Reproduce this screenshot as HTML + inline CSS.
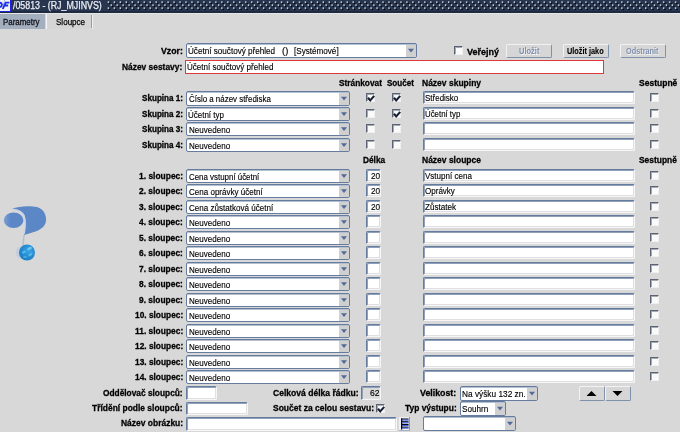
<!DOCTYPE html>
<html><head><meta charset="utf-8"><style>
html,body{margin:0;padding:0}
body{width:680px;height:432px;overflow:hidden;position:relative;background:#d8d8d8;font-family:"Liberation Sans", sans-serif}
</style></head><body>
<div style="position:absolute;left:0;top:0;width:680px;height:13px;background:#27354f"></div>
<div style="position:absolute;left:0;top:11px;width:680px;height:2px;background:#1e2a40"></div>
<svg style="position:absolute;left:0;top:0" width="680" height="13"><rect x="107.70" y="1.4" width="1.4" height="1.4" fill="#e4eaf2"/><rect x="109.10" y="2.8" width="1.3" height="1.3" fill="#000000"/><rect x="113.67" y="1.4" width="1.4" height="1.4" fill="#e4eaf2"/><rect x="115.07" y="2.8" width="1.3" height="1.3" fill="#000000"/><rect x="119.64" y="1.4" width="1.4" height="1.4" fill="#e4eaf2"/><rect x="121.04" y="2.8" width="1.3" height="1.3" fill="#000000"/><rect x="125.61" y="1.4" width="1.4" height="1.4" fill="#e4eaf2"/><rect x="127.01" y="2.8" width="1.3" height="1.3" fill="#000000"/><rect x="131.58" y="1.4" width="1.4" height="1.4" fill="#e4eaf2"/><rect x="132.98" y="2.8" width="1.3" height="1.3" fill="#000000"/><rect x="137.55" y="1.4" width="1.4" height="1.4" fill="#e4eaf2"/><rect x="138.95" y="2.8" width="1.3" height="1.3" fill="#000000"/><rect x="143.52" y="1.4" width="1.4" height="1.4" fill="#e4eaf2"/><rect x="144.92" y="2.8" width="1.3" height="1.3" fill="#000000"/><rect x="149.49" y="1.4" width="1.4" height="1.4" fill="#e4eaf2"/><rect x="150.89" y="2.8" width="1.3" height="1.3" fill="#000000"/><rect x="155.46" y="1.4" width="1.4" height="1.4" fill="#e4eaf2"/><rect x="156.86" y="2.8" width="1.3" height="1.3" fill="#000000"/><rect x="161.43" y="1.4" width="1.4" height="1.4" fill="#e4eaf2"/><rect x="162.83" y="2.8" width="1.3" height="1.3" fill="#000000"/><rect x="167.40" y="1.4" width="1.4" height="1.4" fill="#e4eaf2"/><rect x="168.80" y="2.8" width="1.3" height="1.3" fill="#000000"/><rect x="173.37" y="1.4" width="1.4" height="1.4" fill="#e4eaf2"/><rect x="174.77" y="2.8" width="1.3" height="1.3" fill="#000000"/><rect x="179.34" y="1.4" width="1.4" height="1.4" fill="#e4eaf2"/><rect x="180.74" y="2.8" width="1.3" height="1.3" fill="#000000"/><rect x="185.31" y="1.4" width="1.4" height="1.4" fill="#e4eaf2"/><rect x="186.71" y="2.8" width="1.3" height="1.3" fill="#000000"/><rect x="191.28" y="1.4" width="1.4" height="1.4" fill="#e4eaf2"/><rect x="192.68" y="2.8" width="1.3" height="1.3" fill="#000000"/><rect x="197.25" y="1.4" width="1.4" height="1.4" fill="#e4eaf2"/><rect x="198.65" y="2.8" width="1.3" height="1.3" fill="#000000"/><rect x="203.22" y="1.4" width="1.4" height="1.4" fill="#e4eaf2"/><rect x="204.62" y="2.8" width="1.3" height="1.3" fill="#000000"/><rect x="209.19" y="1.4" width="1.4" height="1.4" fill="#e4eaf2"/><rect x="210.59" y="2.8" width="1.3" height="1.3" fill="#000000"/><rect x="215.16" y="1.4" width="1.4" height="1.4" fill="#e4eaf2"/><rect x="216.56" y="2.8" width="1.3" height="1.3" fill="#000000"/><rect x="221.13" y="1.4" width="1.4" height="1.4" fill="#e4eaf2"/><rect x="222.53" y="2.8" width="1.3" height="1.3" fill="#000000"/><rect x="227.10" y="1.4" width="1.4" height="1.4" fill="#e4eaf2"/><rect x="228.50" y="2.8" width="1.3" height="1.3" fill="#000000"/><rect x="233.07" y="1.4" width="1.4" height="1.4" fill="#e4eaf2"/><rect x="234.47" y="2.8" width="1.3" height="1.3" fill="#000000"/><rect x="239.04" y="1.4" width="1.4" height="1.4" fill="#e4eaf2"/><rect x="240.44" y="2.8" width="1.3" height="1.3" fill="#000000"/><rect x="245.01" y="1.4" width="1.4" height="1.4" fill="#e4eaf2"/><rect x="246.41" y="2.8" width="1.3" height="1.3" fill="#000000"/><rect x="250.98" y="1.4" width="1.4" height="1.4" fill="#e4eaf2"/><rect x="252.38" y="2.8" width="1.3" height="1.3" fill="#000000"/><rect x="256.95" y="1.4" width="1.4" height="1.4" fill="#e4eaf2"/><rect x="258.35" y="2.8" width="1.3" height="1.3" fill="#000000"/><rect x="262.92" y="1.4" width="1.4" height="1.4" fill="#e4eaf2"/><rect x="264.32" y="2.8" width="1.3" height="1.3" fill="#000000"/><rect x="268.89" y="1.4" width="1.4" height="1.4" fill="#e4eaf2"/><rect x="270.29" y="2.8" width="1.3" height="1.3" fill="#000000"/><rect x="274.86" y="1.4" width="1.4" height="1.4" fill="#e4eaf2"/><rect x="276.26" y="2.8" width="1.3" height="1.3" fill="#000000"/><rect x="280.83" y="1.4" width="1.4" height="1.4" fill="#e4eaf2"/><rect x="282.23" y="2.8" width="1.3" height="1.3" fill="#000000"/><rect x="286.80" y="1.4" width="1.4" height="1.4" fill="#e4eaf2"/><rect x="288.20" y="2.8" width="1.3" height="1.3" fill="#000000"/><rect x="292.77" y="1.4" width="1.4" height="1.4" fill="#e4eaf2"/><rect x="294.17" y="2.8" width="1.3" height="1.3" fill="#000000"/><rect x="298.74" y="1.4" width="1.4" height="1.4" fill="#e4eaf2"/><rect x="300.14" y="2.8" width="1.3" height="1.3" fill="#000000"/><rect x="304.71" y="1.4" width="1.4" height="1.4" fill="#e4eaf2"/><rect x="306.11" y="2.8" width="1.3" height="1.3" fill="#000000"/><rect x="310.68" y="1.4" width="1.4" height="1.4" fill="#e4eaf2"/><rect x="312.08" y="2.8" width="1.3" height="1.3" fill="#000000"/><rect x="316.65" y="1.4" width="1.4" height="1.4" fill="#e4eaf2"/><rect x="318.05" y="2.8" width="1.3" height="1.3" fill="#000000"/><rect x="322.62" y="1.4" width="1.4" height="1.4" fill="#e4eaf2"/><rect x="324.02" y="2.8" width="1.3" height="1.3" fill="#000000"/><rect x="328.59" y="1.4" width="1.4" height="1.4" fill="#e4eaf2"/><rect x="329.99" y="2.8" width="1.3" height="1.3" fill="#000000"/><rect x="334.56" y="1.4" width="1.4" height="1.4" fill="#e4eaf2"/><rect x="335.96" y="2.8" width="1.3" height="1.3" fill="#000000"/><rect x="340.53" y="1.4" width="1.4" height="1.4" fill="#e4eaf2"/><rect x="341.93" y="2.8" width="1.3" height="1.3" fill="#000000"/><rect x="346.50" y="1.4" width="1.4" height="1.4" fill="#e4eaf2"/><rect x="347.90" y="2.8" width="1.3" height="1.3" fill="#000000"/><rect x="352.47" y="1.4" width="1.4" height="1.4" fill="#e4eaf2"/><rect x="353.87" y="2.8" width="1.3" height="1.3" fill="#000000"/><rect x="358.44" y="1.4" width="1.4" height="1.4" fill="#e4eaf2"/><rect x="359.84" y="2.8" width="1.3" height="1.3" fill="#000000"/><rect x="364.41" y="1.4" width="1.4" height="1.4" fill="#e4eaf2"/><rect x="365.81" y="2.8" width="1.3" height="1.3" fill="#000000"/><rect x="370.38" y="1.4" width="1.4" height="1.4" fill="#e4eaf2"/><rect x="371.78" y="2.8" width="1.3" height="1.3" fill="#000000"/><rect x="376.35" y="1.4" width="1.4" height="1.4" fill="#e4eaf2"/><rect x="377.75" y="2.8" width="1.3" height="1.3" fill="#000000"/><rect x="382.32" y="1.4" width="1.4" height="1.4" fill="#e4eaf2"/><rect x="383.72" y="2.8" width="1.3" height="1.3" fill="#000000"/><rect x="388.29" y="1.4" width="1.4" height="1.4" fill="#e4eaf2"/><rect x="389.69" y="2.8" width="1.3" height="1.3" fill="#000000"/><rect x="394.26" y="1.4" width="1.4" height="1.4" fill="#e4eaf2"/><rect x="395.66" y="2.8" width="1.3" height="1.3" fill="#000000"/><rect x="400.23" y="1.4" width="1.4" height="1.4" fill="#e4eaf2"/><rect x="401.63" y="2.8" width="1.3" height="1.3" fill="#000000"/><rect x="406.20" y="1.4" width="1.4" height="1.4" fill="#e4eaf2"/><rect x="407.60" y="2.8" width="1.3" height="1.3" fill="#000000"/><rect x="412.17" y="1.4" width="1.4" height="1.4" fill="#e4eaf2"/><rect x="413.57" y="2.8" width="1.3" height="1.3" fill="#000000"/><rect x="418.14" y="1.4" width="1.4" height="1.4" fill="#e4eaf2"/><rect x="419.54" y="2.8" width="1.3" height="1.3" fill="#000000"/><rect x="424.11" y="1.4" width="1.4" height="1.4" fill="#e4eaf2"/><rect x="425.51" y="2.8" width="1.3" height="1.3" fill="#000000"/><rect x="430.08" y="1.4" width="1.4" height="1.4" fill="#e4eaf2"/><rect x="431.48" y="2.8" width="1.3" height="1.3" fill="#000000"/><rect x="436.05" y="1.4" width="1.4" height="1.4" fill="#e4eaf2"/><rect x="437.45" y="2.8" width="1.3" height="1.3" fill="#000000"/><rect x="442.02" y="1.4" width="1.4" height="1.4" fill="#e4eaf2"/><rect x="443.42" y="2.8" width="1.3" height="1.3" fill="#000000"/><rect x="447.99" y="1.4" width="1.4" height="1.4" fill="#e4eaf2"/><rect x="449.39" y="2.8" width="1.3" height="1.3" fill="#000000"/><rect x="453.96" y="1.4" width="1.4" height="1.4" fill="#e4eaf2"/><rect x="455.36" y="2.8" width="1.3" height="1.3" fill="#000000"/><rect x="459.93" y="1.4" width="1.4" height="1.4" fill="#e4eaf2"/><rect x="461.33" y="2.8" width="1.3" height="1.3" fill="#000000"/><rect x="465.90" y="1.4" width="1.4" height="1.4" fill="#e4eaf2"/><rect x="467.30" y="2.8" width="1.3" height="1.3" fill="#000000"/><rect x="471.87" y="1.4" width="1.4" height="1.4" fill="#e4eaf2"/><rect x="473.27" y="2.8" width="1.3" height="1.3" fill="#000000"/><rect x="477.84" y="1.4" width="1.4" height="1.4" fill="#e4eaf2"/><rect x="479.24" y="2.8" width="1.3" height="1.3" fill="#000000"/><rect x="483.81" y="1.4" width="1.4" height="1.4" fill="#e4eaf2"/><rect x="485.21" y="2.8" width="1.3" height="1.3" fill="#000000"/><rect x="489.78" y="1.4" width="1.4" height="1.4" fill="#e4eaf2"/><rect x="491.18" y="2.8" width="1.3" height="1.3" fill="#000000"/><rect x="495.75" y="1.4" width="1.4" height="1.4" fill="#e4eaf2"/><rect x="497.15" y="2.8" width="1.3" height="1.3" fill="#000000"/><rect x="501.72" y="1.4" width="1.4" height="1.4" fill="#e4eaf2"/><rect x="503.12" y="2.8" width="1.3" height="1.3" fill="#000000"/><rect x="507.69" y="1.4" width="1.4" height="1.4" fill="#e4eaf2"/><rect x="509.09" y="2.8" width="1.3" height="1.3" fill="#000000"/><rect x="513.66" y="1.4" width="1.4" height="1.4" fill="#e4eaf2"/><rect x="515.06" y="2.8" width="1.3" height="1.3" fill="#000000"/><rect x="519.63" y="1.4" width="1.4" height="1.4" fill="#e4eaf2"/><rect x="521.03" y="2.8" width="1.3" height="1.3" fill="#000000"/><rect x="525.60" y="1.4" width="1.4" height="1.4" fill="#e4eaf2"/><rect x="527.00" y="2.8" width="1.3" height="1.3" fill="#000000"/><rect x="531.57" y="1.4" width="1.4" height="1.4" fill="#e4eaf2"/><rect x="532.97" y="2.8" width="1.3" height="1.3" fill="#000000"/><rect x="537.54" y="1.4" width="1.4" height="1.4" fill="#e4eaf2"/><rect x="538.94" y="2.8" width="1.3" height="1.3" fill="#000000"/><rect x="543.51" y="1.4" width="1.4" height="1.4" fill="#e4eaf2"/><rect x="544.91" y="2.8" width="1.3" height="1.3" fill="#000000"/><rect x="549.48" y="1.4" width="1.4" height="1.4" fill="#e4eaf2"/><rect x="550.88" y="2.8" width="1.3" height="1.3" fill="#000000"/><rect x="555.45" y="1.4" width="1.4" height="1.4" fill="#e4eaf2"/><rect x="556.85" y="2.8" width="1.3" height="1.3" fill="#000000"/><rect x="561.42" y="1.4" width="1.4" height="1.4" fill="#e4eaf2"/><rect x="562.82" y="2.8" width="1.3" height="1.3" fill="#000000"/><rect x="567.39" y="1.4" width="1.4" height="1.4" fill="#e4eaf2"/><rect x="568.79" y="2.8" width="1.3" height="1.3" fill="#000000"/><rect x="573.36" y="1.4" width="1.4" height="1.4" fill="#e4eaf2"/><rect x="574.76" y="2.8" width="1.3" height="1.3" fill="#000000"/><rect x="579.33" y="1.4" width="1.4" height="1.4" fill="#e4eaf2"/><rect x="580.73" y="2.8" width="1.3" height="1.3" fill="#000000"/><rect x="585.30" y="1.4" width="1.4" height="1.4" fill="#e4eaf2"/><rect x="586.70" y="2.8" width="1.3" height="1.3" fill="#000000"/><rect x="591.27" y="1.4" width="1.4" height="1.4" fill="#e4eaf2"/><rect x="592.67" y="2.8" width="1.3" height="1.3" fill="#000000"/><rect x="597.24" y="1.4" width="1.4" height="1.4" fill="#e4eaf2"/><rect x="598.64" y="2.8" width="1.3" height="1.3" fill="#000000"/><rect x="603.21" y="1.4" width="1.4" height="1.4" fill="#e4eaf2"/><rect x="604.61" y="2.8" width="1.3" height="1.3" fill="#000000"/><rect x="609.18" y="1.4" width="1.4" height="1.4" fill="#e4eaf2"/><rect x="610.58" y="2.8" width="1.3" height="1.3" fill="#000000"/><rect x="615.15" y="1.4" width="1.4" height="1.4" fill="#e4eaf2"/><rect x="616.55" y="2.8" width="1.3" height="1.3" fill="#000000"/><rect x="621.12" y="1.4" width="1.4" height="1.4" fill="#e4eaf2"/><rect x="622.52" y="2.8" width="1.3" height="1.3" fill="#000000"/><rect x="627.09" y="1.4" width="1.4" height="1.4" fill="#e4eaf2"/><rect x="628.49" y="2.8" width="1.3" height="1.3" fill="#000000"/><rect x="633.06" y="1.4" width="1.4" height="1.4" fill="#e4eaf2"/><rect x="634.46" y="2.8" width="1.3" height="1.3" fill="#000000"/><rect x="639.03" y="1.4" width="1.4" height="1.4" fill="#e4eaf2"/><rect x="640.43" y="2.8" width="1.3" height="1.3" fill="#000000"/><rect x="645.00" y="1.4" width="1.4" height="1.4" fill="#e4eaf2"/><rect x="646.40" y="2.8" width="1.3" height="1.3" fill="#000000"/><rect x="650.97" y="1.4" width="1.4" height="1.4" fill="#e4eaf2"/><rect x="652.37" y="2.8" width="1.3" height="1.3" fill="#000000"/><rect x="656.94" y="1.4" width="1.4" height="1.4" fill="#e4eaf2"/><rect x="658.34" y="2.8" width="1.3" height="1.3" fill="#000000"/><rect x="662.91" y="1.4" width="1.4" height="1.4" fill="#e4eaf2"/><rect x="664.31" y="2.8" width="1.3" height="1.3" fill="#000000"/><rect x="668.88" y="1.4" width="1.4" height="1.4" fill="#e4eaf2"/><rect x="670.28" y="2.8" width="1.3" height="1.3" fill="#000000"/><rect x="674.85" y="1.4" width="1.4" height="1.4" fill="#e4eaf2"/><rect x="676.25" y="2.8" width="1.3" height="1.3" fill="#000000"/><rect x="110.50" y="4.4" width="1.4" height="1.4" fill="#e4eaf2"/><rect x="111.90" y="5.8" width="1.3" height="1.3" fill="#000000"/><rect x="116.47" y="4.4" width="1.4" height="1.4" fill="#e4eaf2"/><rect x="117.87" y="5.8" width="1.3" height="1.3" fill="#000000"/><rect x="122.44" y="4.4" width="1.4" height="1.4" fill="#e4eaf2"/><rect x="123.84" y="5.8" width="1.3" height="1.3" fill="#000000"/><rect x="128.41" y="4.4" width="1.4" height="1.4" fill="#e4eaf2"/><rect x="129.81" y="5.8" width="1.3" height="1.3" fill="#000000"/><rect x="134.38" y="4.4" width="1.4" height="1.4" fill="#e4eaf2"/><rect x="135.78" y="5.8" width="1.3" height="1.3" fill="#000000"/><rect x="140.35" y="4.4" width="1.4" height="1.4" fill="#e4eaf2"/><rect x="141.75" y="5.8" width="1.3" height="1.3" fill="#000000"/><rect x="146.32" y="4.4" width="1.4" height="1.4" fill="#e4eaf2"/><rect x="147.72" y="5.8" width="1.3" height="1.3" fill="#000000"/><rect x="152.29" y="4.4" width="1.4" height="1.4" fill="#e4eaf2"/><rect x="153.69" y="5.8" width="1.3" height="1.3" fill="#000000"/><rect x="158.26" y="4.4" width="1.4" height="1.4" fill="#e4eaf2"/><rect x="159.66" y="5.8" width="1.3" height="1.3" fill="#000000"/><rect x="164.23" y="4.4" width="1.4" height="1.4" fill="#e4eaf2"/><rect x="165.63" y="5.8" width="1.3" height="1.3" fill="#000000"/><rect x="170.20" y="4.4" width="1.4" height="1.4" fill="#e4eaf2"/><rect x="171.60" y="5.8" width="1.3" height="1.3" fill="#000000"/><rect x="176.17" y="4.4" width="1.4" height="1.4" fill="#e4eaf2"/><rect x="177.57" y="5.8" width="1.3" height="1.3" fill="#000000"/><rect x="182.14" y="4.4" width="1.4" height="1.4" fill="#e4eaf2"/><rect x="183.54" y="5.8" width="1.3" height="1.3" fill="#000000"/><rect x="188.11" y="4.4" width="1.4" height="1.4" fill="#e4eaf2"/><rect x="189.51" y="5.8" width="1.3" height="1.3" fill="#000000"/><rect x="194.08" y="4.4" width="1.4" height="1.4" fill="#e4eaf2"/><rect x="195.48" y="5.8" width="1.3" height="1.3" fill="#000000"/><rect x="200.05" y="4.4" width="1.4" height="1.4" fill="#e4eaf2"/><rect x="201.45" y="5.8" width="1.3" height="1.3" fill="#000000"/><rect x="206.02" y="4.4" width="1.4" height="1.4" fill="#e4eaf2"/><rect x="207.42" y="5.8" width="1.3" height="1.3" fill="#000000"/><rect x="211.99" y="4.4" width="1.4" height="1.4" fill="#e4eaf2"/><rect x="213.39" y="5.8" width="1.3" height="1.3" fill="#000000"/><rect x="217.96" y="4.4" width="1.4" height="1.4" fill="#e4eaf2"/><rect x="219.36" y="5.8" width="1.3" height="1.3" fill="#000000"/><rect x="223.93" y="4.4" width="1.4" height="1.4" fill="#e4eaf2"/><rect x="225.33" y="5.8" width="1.3" height="1.3" fill="#000000"/><rect x="229.90" y="4.4" width="1.4" height="1.4" fill="#e4eaf2"/><rect x="231.30" y="5.8" width="1.3" height="1.3" fill="#000000"/><rect x="235.87" y="4.4" width="1.4" height="1.4" fill="#e4eaf2"/><rect x="237.27" y="5.8" width="1.3" height="1.3" fill="#000000"/><rect x="241.84" y="4.4" width="1.4" height="1.4" fill="#e4eaf2"/><rect x="243.24" y="5.8" width="1.3" height="1.3" fill="#000000"/><rect x="247.81" y="4.4" width="1.4" height="1.4" fill="#e4eaf2"/><rect x="249.21" y="5.8" width="1.3" height="1.3" fill="#000000"/><rect x="253.78" y="4.4" width="1.4" height="1.4" fill="#e4eaf2"/><rect x="255.18" y="5.8" width="1.3" height="1.3" fill="#000000"/><rect x="259.75" y="4.4" width="1.4" height="1.4" fill="#e4eaf2"/><rect x="261.15" y="5.8" width="1.3" height="1.3" fill="#000000"/><rect x="265.72" y="4.4" width="1.4" height="1.4" fill="#e4eaf2"/><rect x="267.12" y="5.8" width="1.3" height="1.3" fill="#000000"/><rect x="271.69" y="4.4" width="1.4" height="1.4" fill="#e4eaf2"/><rect x="273.09" y="5.8" width="1.3" height="1.3" fill="#000000"/><rect x="277.66" y="4.4" width="1.4" height="1.4" fill="#e4eaf2"/><rect x="279.06" y="5.8" width="1.3" height="1.3" fill="#000000"/><rect x="283.63" y="4.4" width="1.4" height="1.4" fill="#e4eaf2"/><rect x="285.03" y="5.8" width="1.3" height="1.3" fill="#000000"/><rect x="289.60" y="4.4" width="1.4" height="1.4" fill="#e4eaf2"/><rect x="291.00" y="5.8" width="1.3" height="1.3" fill="#000000"/><rect x="295.57" y="4.4" width="1.4" height="1.4" fill="#e4eaf2"/><rect x="296.97" y="5.8" width="1.3" height="1.3" fill="#000000"/><rect x="301.54" y="4.4" width="1.4" height="1.4" fill="#e4eaf2"/><rect x="302.94" y="5.8" width="1.3" height="1.3" fill="#000000"/><rect x="307.51" y="4.4" width="1.4" height="1.4" fill="#e4eaf2"/><rect x="308.91" y="5.8" width="1.3" height="1.3" fill="#000000"/><rect x="313.48" y="4.4" width="1.4" height="1.4" fill="#e4eaf2"/><rect x="314.88" y="5.8" width="1.3" height="1.3" fill="#000000"/><rect x="319.45" y="4.4" width="1.4" height="1.4" fill="#e4eaf2"/><rect x="320.85" y="5.8" width="1.3" height="1.3" fill="#000000"/><rect x="325.42" y="4.4" width="1.4" height="1.4" fill="#e4eaf2"/><rect x="326.82" y="5.8" width="1.3" height="1.3" fill="#000000"/><rect x="331.39" y="4.4" width="1.4" height="1.4" fill="#e4eaf2"/><rect x="332.79" y="5.8" width="1.3" height="1.3" fill="#000000"/><rect x="337.36" y="4.4" width="1.4" height="1.4" fill="#e4eaf2"/><rect x="338.76" y="5.8" width="1.3" height="1.3" fill="#000000"/><rect x="343.33" y="4.4" width="1.4" height="1.4" fill="#e4eaf2"/><rect x="344.73" y="5.8" width="1.3" height="1.3" fill="#000000"/><rect x="349.30" y="4.4" width="1.4" height="1.4" fill="#e4eaf2"/><rect x="350.70" y="5.8" width="1.3" height="1.3" fill="#000000"/><rect x="355.27" y="4.4" width="1.4" height="1.4" fill="#e4eaf2"/><rect x="356.67" y="5.8" width="1.3" height="1.3" fill="#000000"/><rect x="361.24" y="4.4" width="1.4" height="1.4" fill="#e4eaf2"/><rect x="362.64" y="5.8" width="1.3" height="1.3" fill="#000000"/><rect x="367.21" y="4.4" width="1.4" height="1.4" fill="#e4eaf2"/><rect x="368.61" y="5.8" width="1.3" height="1.3" fill="#000000"/><rect x="373.18" y="4.4" width="1.4" height="1.4" fill="#e4eaf2"/><rect x="374.58" y="5.8" width="1.3" height="1.3" fill="#000000"/><rect x="379.15" y="4.4" width="1.4" height="1.4" fill="#e4eaf2"/><rect x="380.55" y="5.8" width="1.3" height="1.3" fill="#000000"/><rect x="385.12" y="4.4" width="1.4" height="1.4" fill="#e4eaf2"/><rect x="386.52" y="5.8" width="1.3" height="1.3" fill="#000000"/><rect x="391.09" y="4.4" width="1.4" height="1.4" fill="#e4eaf2"/><rect x="392.49" y="5.8" width="1.3" height="1.3" fill="#000000"/><rect x="397.06" y="4.4" width="1.4" height="1.4" fill="#e4eaf2"/><rect x="398.46" y="5.8" width="1.3" height="1.3" fill="#000000"/><rect x="403.03" y="4.4" width="1.4" height="1.4" fill="#e4eaf2"/><rect x="404.43" y="5.8" width="1.3" height="1.3" fill="#000000"/><rect x="409.00" y="4.4" width="1.4" height="1.4" fill="#e4eaf2"/><rect x="410.40" y="5.8" width="1.3" height="1.3" fill="#000000"/><rect x="414.97" y="4.4" width="1.4" height="1.4" fill="#e4eaf2"/><rect x="416.37" y="5.8" width="1.3" height="1.3" fill="#000000"/><rect x="420.94" y="4.4" width="1.4" height="1.4" fill="#e4eaf2"/><rect x="422.34" y="5.8" width="1.3" height="1.3" fill="#000000"/><rect x="426.91" y="4.4" width="1.4" height="1.4" fill="#e4eaf2"/><rect x="428.31" y="5.8" width="1.3" height="1.3" fill="#000000"/><rect x="432.88" y="4.4" width="1.4" height="1.4" fill="#e4eaf2"/><rect x="434.28" y="5.8" width="1.3" height="1.3" fill="#000000"/><rect x="438.85" y="4.4" width="1.4" height="1.4" fill="#e4eaf2"/><rect x="440.25" y="5.8" width="1.3" height="1.3" fill="#000000"/><rect x="444.82" y="4.4" width="1.4" height="1.4" fill="#e4eaf2"/><rect x="446.22" y="5.8" width="1.3" height="1.3" fill="#000000"/><rect x="450.79" y="4.4" width="1.4" height="1.4" fill="#e4eaf2"/><rect x="452.19" y="5.8" width="1.3" height="1.3" fill="#000000"/><rect x="456.76" y="4.4" width="1.4" height="1.4" fill="#e4eaf2"/><rect x="458.16" y="5.8" width="1.3" height="1.3" fill="#000000"/><rect x="462.73" y="4.4" width="1.4" height="1.4" fill="#e4eaf2"/><rect x="464.13" y="5.8" width="1.3" height="1.3" fill="#000000"/><rect x="468.70" y="4.4" width="1.4" height="1.4" fill="#e4eaf2"/><rect x="470.10" y="5.8" width="1.3" height="1.3" fill="#000000"/><rect x="474.67" y="4.4" width="1.4" height="1.4" fill="#e4eaf2"/><rect x="476.07" y="5.8" width="1.3" height="1.3" fill="#000000"/><rect x="480.64" y="4.4" width="1.4" height="1.4" fill="#e4eaf2"/><rect x="482.04" y="5.8" width="1.3" height="1.3" fill="#000000"/><rect x="486.61" y="4.4" width="1.4" height="1.4" fill="#e4eaf2"/><rect x="488.01" y="5.8" width="1.3" height="1.3" fill="#000000"/><rect x="492.58" y="4.4" width="1.4" height="1.4" fill="#e4eaf2"/><rect x="493.98" y="5.8" width="1.3" height="1.3" fill="#000000"/><rect x="498.55" y="4.4" width="1.4" height="1.4" fill="#e4eaf2"/><rect x="499.95" y="5.8" width="1.3" height="1.3" fill="#000000"/><rect x="504.52" y="4.4" width="1.4" height="1.4" fill="#e4eaf2"/><rect x="505.92" y="5.8" width="1.3" height="1.3" fill="#000000"/><rect x="510.49" y="4.4" width="1.4" height="1.4" fill="#e4eaf2"/><rect x="511.89" y="5.8" width="1.3" height="1.3" fill="#000000"/><rect x="516.46" y="4.4" width="1.4" height="1.4" fill="#e4eaf2"/><rect x="517.86" y="5.8" width="1.3" height="1.3" fill="#000000"/><rect x="522.43" y="4.4" width="1.4" height="1.4" fill="#e4eaf2"/><rect x="523.83" y="5.8" width="1.3" height="1.3" fill="#000000"/><rect x="528.40" y="4.4" width="1.4" height="1.4" fill="#e4eaf2"/><rect x="529.80" y="5.8" width="1.3" height="1.3" fill="#000000"/><rect x="534.37" y="4.4" width="1.4" height="1.4" fill="#e4eaf2"/><rect x="535.77" y="5.8" width="1.3" height="1.3" fill="#000000"/><rect x="540.34" y="4.4" width="1.4" height="1.4" fill="#e4eaf2"/><rect x="541.74" y="5.8" width="1.3" height="1.3" fill="#000000"/><rect x="546.31" y="4.4" width="1.4" height="1.4" fill="#e4eaf2"/><rect x="547.71" y="5.8" width="1.3" height="1.3" fill="#000000"/><rect x="552.28" y="4.4" width="1.4" height="1.4" fill="#e4eaf2"/><rect x="553.68" y="5.8" width="1.3" height="1.3" fill="#000000"/><rect x="558.25" y="4.4" width="1.4" height="1.4" fill="#e4eaf2"/><rect x="559.65" y="5.8" width="1.3" height="1.3" fill="#000000"/><rect x="564.22" y="4.4" width="1.4" height="1.4" fill="#e4eaf2"/><rect x="565.62" y="5.8" width="1.3" height="1.3" fill="#000000"/><rect x="570.19" y="4.4" width="1.4" height="1.4" fill="#e4eaf2"/><rect x="571.59" y="5.8" width="1.3" height="1.3" fill="#000000"/><rect x="576.16" y="4.4" width="1.4" height="1.4" fill="#e4eaf2"/><rect x="577.56" y="5.8" width="1.3" height="1.3" fill="#000000"/><rect x="582.13" y="4.4" width="1.4" height="1.4" fill="#e4eaf2"/><rect x="583.53" y="5.8" width="1.3" height="1.3" fill="#000000"/><rect x="588.10" y="4.4" width="1.4" height="1.4" fill="#e4eaf2"/><rect x="589.50" y="5.8" width="1.3" height="1.3" fill="#000000"/><rect x="594.07" y="4.4" width="1.4" height="1.4" fill="#e4eaf2"/><rect x="595.47" y="5.8" width="1.3" height="1.3" fill="#000000"/><rect x="600.04" y="4.4" width="1.4" height="1.4" fill="#e4eaf2"/><rect x="601.44" y="5.8" width="1.3" height="1.3" fill="#000000"/><rect x="606.01" y="4.4" width="1.4" height="1.4" fill="#e4eaf2"/><rect x="607.41" y="5.8" width="1.3" height="1.3" fill="#000000"/><rect x="611.98" y="4.4" width="1.4" height="1.4" fill="#e4eaf2"/><rect x="613.38" y="5.8" width="1.3" height="1.3" fill="#000000"/><rect x="617.95" y="4.4" width="1.4" height="1.4" fill="#e4eaf2"/><rect x="619.35" y="5.8" width="1.3" height="1.3" fill="#000000"/><rect x="623.92" y="4.4" width="1.4" height="1.4" fill="#e4eaf2"/><rect x="625.32" y="5.8" width="1.3" height="1.3" fill="#000000"/><rect x="629.89" y="4.4" width="1.4" height="1.4" fill="#e4eaf2"/><rect x="631.29" y="5.8" width="1.3" height="1.3" fill="#000000"/><rect x="635.86" y="4.4" width="1.4" height="1.4" fill="#e4eaf2"/><rect x="637.26" y="5.8" width="1.3" height="1.3" fill="#000000"/><rect x="641.83" y="4.4" width="1.4" height="1.4" fill="#e4eaf2"/><rect x="643.23" y="5.8" width="1.3" height="1.3" fill="#000000"/><rect x="647.80" y="4.4" width="1.4" height="1.4" fill="#e4eaf2"/><rect x="649.20" y="5.8" width="1.3" height="1.3" fill="#000000"/><rect x="653.77" y="4.4" width="1.4" height="1.4" fill="#e4eaf2"/><rect x="655.17" y="5.8" width="1.3" height="1.3" fill="#000000"/><rect x="659.74" y="4.4" width="1.4" height="1.4" fill="#e4eaf2"/><rect x="661.14" y="5.8" width="1.3" height="1.3" fill="#000000"/><rect x="665.71" y="4.4" width="1.4" height="1.4" fill="#e4eaf2"/><rect x="667.11" y="5.8" width="1.3" height="1.3" fill="#000000"/><rect x="671.68" y="4.4" width="1.4" height="1.4" fill="#e4eaf2"/><rect x="673.08" y="5.8" width="1.3" height="1.3" fill="#000000"/><rect x="677.65" y="4.4" width="1.4" height="1.4" fill="#e4eaf2"/><rect x="679.05" y="5.8" width="1.3" height="1.3" fill="#000000"/><rect x="107.70" y="7.4" width="1.4" height="1.4" fill="#e4eaf2"/><rect x="109.10" y="8.8" width="1.3" height="1.3" fill="#000000"/><rect x="113.67" y="7.4" width="1.4" height="1.4" fill="#e4eaf2"/><rect x="115.07" y="8.8" width="1.3" height="1.3" fill="#000000"/><rect x="119.64" y="7.4" width="1.4" height="1.4" fill="#e4eaf2"/><rect x="121.04" y="8.8" width="1.3" height="1.3" fill="#000000"/><rect x="125.61" y="7.4" width="1.4" height="1.4" fill="#e4eaf2"/><rect x="127.01" y="8.8" width="1.3" height="1.3" fill="#000000"/><rect x="131.58" y="7.4" width="1.4" height="1.4" fill="#e4eaf2"/><rect x="132.98" y="8.8" width="1.3" height="1.3" fill="#000000"/><rect x="137.55" y="7.4" width="1.4" height="1.4" fill="#e4eaf2"/><rect x="138.95" y="8.8" width="1.3" height="1.3" fill="#000000"/><rect x="143.52" y="7.4" width="1.4" height="1.4" fill="#e4eaf2"/><rect x="144.92" y="8.8" width="1.3" height="1.3" fill="#000000"/><rect x="149.49" y="7.4" width="1.4" height="1.4" fill="#e4eaf2"/><rect x="150.89" y="8.8" width="1.3" height="1.3" fill="#000000"/><rect x="155.46" y="7.4" width="1.4" height="1.4" fill="#e4eaf2"/><rect x="156.86" y="8.8" width="1.3" height="1.3" fill="#000000"/><rect x="161.43" y="7.4" width="1.4" height="1.4" fill="#e4eaf2"/><rect x="162.83" y="8.8" width="1.3" height="1.3" fill="#000000"/><rect x="167.40" y="7.4" width="1.4" height="1.4" fill="#e4eaf2"/><rect x="168.80" y="8.8" width="1.3" height="1.3" fill="#000000"/><rect x="173.37" y="7.4" width="1.4" height="1.4" fill="#e4eaf2"/><rect x="174.77" y="8.8" width="1.3" height="1.3" fill="#000000"/><rect x="179.34" y="7.4" width="1.4" height="1.4" fill="#e4eaf2"/><rect x="180.74" y="8.8" width="1.3" height="1.3" fill="#000000"/><rect x="185.31" y="7.4" width="1.4" height="1.4" fill="#e4eaf2"/><rect x="186.71" y="8.8" width="1.3" height="1.3" fill="#000000"/><rect x="191.28" y="7.4" width="1.4" height="1.4" fill="#e4eaf2"/><rect x="192.68" y="8.8" width="1.3" height="1.3" fill="#000000"/><rect x="197.25" y="7.4" width="1.4" height="1.4" fill="#e4eaf2"/><rect x="198.65" y="8.8" width="1.3" height="1.3" fill="#000000"/><rect x="203.22" y="7.4" width="1.4" height="1.4" fill="#e4eaf2"/><rect x="204.62" y="8.8" width="1.3" height="1.3" fill="#000000"/><rect x="209.19" y="7.4" width="1.4" height="1.4" fill="#e4eaf2"/><rect x="210.59" y="8.8" width="1.3" height="1.3" fill="#000000"/><rect x="215.16" y="7.4" width="1.4" height="1.4" fill="#e4eaf2"/><rect x="216.56" y="8.8" width="1.3" height="1.3" fill="#000000"/><rect x="221.13" y="7.4" width="1.4" height="1.4" fill="#e4eaf2"/><rect x="222.53" y="8.8" width="1.3" height="1.3" fill="#000000"/><rect x="227.10" y="7.4" width="1.4" height="1.4" fill="#e4eaf2"/><rect x="228.50" y="8.8" width="1.3" height="1.3" fill="#000000"/><rect x="233.07" y="7.4" width="1.4" height="1.4" fill="#e4eaf2"/><rect x="234.47" y="8.8" width="1.3" height="1.3" fill="#000000"/><rect x="239.04" y="7.4" width="1.4" height="1.4" fill="#e4eaf2"/><rect x="240.44" y="8.8" width="1.3" height="1.3" fill="#000000"/><rect x="245.01" y="7.4" width="1.4" height="1.4" fill="#e4eaf2"/><rect x="246.41" y="8.8" width="1.3" height="1.3" fill="#000000"/><rect x="250.98" y="7.4" width="1.4" height="1.4" fill="#e4eaf2"/><rect x="252.38" y="8.8" width="1.3" height="1.3" fill="#000000"/><rect x="256.95" y="7.4" width="1.4" height="1.4" fill="#e4eaf2"/><rect x="258.35" y="8.8" width="1.3" height="1.3" fill="#000000"/><rect x="262.92" y="7.4" width="1.4" height="1.4" fill="#e4eaf2"/><rect x="264.32" y="8.8" width="1.3" height="1.3" fill="#000000"/><rect x="268.89" y="7.4" width="1.4" height="1.4" fill="#e4eaf2"/><rect x="270.29" y="8.8" width="1.3" height="1.3" fill="#000000"/><rect x="274.86" y="7.4" width="1.4" height="1.4" fill="#e4eaf2"/><rect x="276.26" y="8.8" width="1.3" height="1.3" fill="#000000"/><rect x="280.83" y="7.4" width="1.4" height="1.4" fill="#e4eaf2"/><rect x="282.23" y="8.8" width="1.3" height="1.3" fill="#000000"/><rect x="286.80" y="7.4" width="1.4" height="1.4" fill="#e4eaf2"/><rect x="288.20" y="8.8" width="1.3" height="1.3" fill="#000000"/><rect x="292.77" y="7.4" width="1.4" height="1.4" fill="#e4eaf2"/><rect x="294.17" y="8.8" width="1.3" height="1.3" fill="#000000"/><rect x="298.74" y="7.4" width="1.4" height="1.4" fill="#e4eaf2"/><rect x="300.14" y="8.8" width="1.3" height="1.3" fill="#000000"/><rect x="304.71" y="7.4" width="1.4" height="1.4" fill="#e4eaf2"/><rect x="306.11" y="8.8" width="1.3" height="1.3" fill="#000000"/><rect x="310.68" y="7.4" width="1.4" height="1.4" fill="#e4eaf2"/><rect x="312.08" y="8.8" width="1.3" height="1.3" fill="#000000"/><rect x="316.65" y="7.4" width="1.4" height="1.4" fill="#e4eaf2"/><rect x="318.05" y="8.8" width="1.3" height="1.3" fill="#000000"/><rect x="322.62" y="7.4" width="1.4" height="1.4" fill="#e4eaf2"/><rect x="324.02" y="8.8" width="1.3" height="1.3" fill="#000000"/><rect x="328.59" y="7.4" width="1.4" height="1.4" fill="#e4eaf2"/><rect x="329.99" y="8.8" width="1.3" height="1.3" fill="#000000"/><rect x="334.56" y="7.4" width="1.4" height="1.4" fill="#e4eaf2"/><rect x="335.96" y="8.8" width="1.3" height="1.3" fill="#000000"/><rect x="340.53" y="7.4" width="1.4" height="1.4" fill="#e4eaf2"/><rect x="341.93" y="8.8" width="1.3" height="1.3" fill="#000000"/><rect x="346.50" y="7.4" width="1.4" height="1.4" fill="#e4eaf2"/><rect x="347.90" y="8.8" width="1.3" height="1.3" fill="#000000"/><rect x="352.47" y="7.4" width="1.4" height="1.4" fill="#e4eaf2"/><rect x="353.87" y="8.8" width="1.3" height="1.3" fill="#000000"/><rect x="358.44" y="7.4" width="1.4" height="1.4" fill="#e4eaf2"/><rect x="359.84" y="8.8" width="1.3" height="1.3" fill="#000000"/><rect x="364.41" y="7.4" width="1.4" height="1.4" fill="#e4eaf2"/><rect x="365.81" y="8.8" width="1.3" height="1.3" fill="#000000"/><rect x="370.38" y="7.4" width="1.4" height="1.4" fill="#e4eaf2"/><rect x="371.78" y="8.8" width="1.3" height="1.3" fill="#000000"/><rect x="376.35" y="7.4" width="1.4" height="1.4" fill="#e4eaf2"/><rect x="377.75" y="8.8" width="1.3" height="1.3" fill="#000000"/><rect x="382.32" y="7.4" width="1.4" height="1.4" fill="#e4eaf2"/><rect x="383.72" y="8.8" width="1.3" height="1.3" fill="#000000"/><rect x="388.29" y="7.4" width="1.4" height="1.4" fill="#e4eaf2"/><rect x="389.69" y="8.8" width="1.3" height="1.3" fill="#000000"/><rect x="394.26" y="7.4" width="1.4" height="1.4" fill="#e4eaf2"/><rect x="395.66" y="8.8" width="1.3" height="1.3" fill="#000000"/><rect x="400.23" y="7.4" width="1.4" height="1.4" fill="#e4eaf2"/><rect x="401.63" y="8.8" width="1.3" height="1.3" fill="#000000"/><rect x="406.20" y="7.4" width="1.4" height="1.4" fill="#e4eaf2"/><rect x="407.60" y="8.8" width="1.3" height="1.3" fill="#000000"/><rect x="412.17" y="7.4" width="1.4" height="1.4" fill="#e4eaf2"/><rect x="413.57" y="8.8" width="1.3" height="1.3" fill="#000000"/><rect x="418.14" y="7.4" width="1.4" height="1.4" fill="#e4eaf2"/><rect x="419.54" y="8.8" width="1.3" height="1.3" fill="#000000"/><rect x="424.11" y="7.4" width="1.4" height="1.4" fill="#e4eaf2"/><rect x="425.51" y="8.8" width="1.3" height="1.3" fill="#000000"/><rect x="430.08" y="7.4" width="1.4" height="1.4" fill="#e4eaf2"/><rect x="431.48" y="8.8" width="1.3" height="1.3" fill="#000000"/><rect x="436.05" y="7.4" width="1.4" height="1.4" fill="#e4eaf2"/><rect x="437.45" y="8.8" width="1.3" height="1.3" fill="#000000"/><rect x="442.02" y="7.4" width="1.4" height="1.4" fill="#e4eaf2"/><rect x="443.42" y="8.8" width="1.3" height="1.3" fill="#000000"/><rect x="447.99" y="7.4" width="1.4" height="1.4" fill="#e4eaf2"/><rect x="449.39" y="8.8" width="1.3" height="1.3" fill="#000000"/><rect x="453.96" y="7.4" width="1.4" height="1.4" fill="#e4eaf2"/><rect x="455.36" y="8.8" width="1.3" height="1.3" fill="#000000"/><rect x="459.93" y="7.4" width="1.4" height="1.4" fill="#e4eaf2"/><rect x="461.33" y="8.8" width="1.3" height="1.3" fill="#000000"/><rect x="465.90" y="7.4" width="1.4" height="1.4" fill="#e4eaf2"/><rect x="467.30" y="8.8" width="1.3" height="1.3" fill="#000000"/><rect x="471.87" y="7.4" width="1.4" height="1.4" fill="#e4eaf2"/><rect x="473.27" y="8.8" width="1.3" height="1.3" fill="#000000"/><rect x="477.84" y="7.4" width="1.4" height="1.4" fill="#e4eaf2"/><rect x="479.24" y="8.8" width="1.3" height="1.3" fill="#000000"/><rect x="483.81" y="7.4" width="1.4" height="1.4" fill="#e4eaf2"/><rect x="485.21" y="8.8" width="1.3" height="1.3" fill="#000000"/><rect x="489.78" y="7.4" width="1.4" height="1.4" fill="#e4eaf2"/><rect x="491.18" y="8.8" width="1.3" height="1.3" fill="#000000"/><rect x="495.75" y="7.4" width="1.4" height="1.4" fill="#e4eaf2"/><rect x="497.15" y="8.8" width="1.3" height="1.3" fill="#000000"/><rect x="501.72" y="7.4" width="1.4" height="1.4" fill="#e4eaf2"/><rect x="503.12" y="8.8" width="1.3" height="1.3" fill="#000000"/><rect x="507.69" y="7.4" width="1.4" height="1.4" fill="#e4eaf2"/><rect x="509.09" y="8.8" width="1.3" height="1.3" fill="#000000"/><rect x="513.66" y="7.4" width="1.4" height="1.4" fill="#e4eaf2"/><rect x="515.06" y="8.8" width="1.3" height="1.3" fill="#000000"/><rect x="519.63" y="7.4" width="1.4" height="1.4" fill="#e4eaf2"/><rect x="521.03" y="8.8" width="1.3" height="1.3" fill="#000000"/><rect x="525.60" y="7.4" width="1.4" height="1.4" fill="#e4eaf2"/><rect x="527.00" y="8.8" width="1.3" height="1.3" fill="#000000"/><rect x="531.57" y="7.4" width="1.4" height="1.4" fill="#e4eaf2"/><rect x="532.97" y="8.8" width="1.3" height="1.3" fill="#000000"/><rect x="537.54" y="7.4" width="1.4" height="1.4" fill="#e4eaf2"/><rect x="538.94" y="8.8" width="1.3" height="1.3" fill="#000000"/><rect x="543.51" y="7.4" width="1.4" height="1.4" fill="#e4eaf2"/><rect x="544.91" y="8.8" width="1.3" height="1.3" fill="#000000"/><rect x="549.48" y="7.4" width="1.4" height="1.4" fill="#e4eaf2"/><rect x="550.88" y="8.8" width="1.3" height="1.3" fill="#000000"/><rect x="555.45" y="7.4" width="1.4" height="1.4" fill="#e4eaf2"/><rect x="556.85" y="8.8" width="1.3" height="1.3" fill="#000000"/><rect x="561.42" y="7.4" width="1.4" height="1.4" fill="#e4eaf2"/><rect x="562.82" y="8.8" width="1.3" height="1.3" fill="#000000"/><rect x="567.39" y="7.4" width="1.4" height="1.4" fill="#e4eaf2"/><rect x="568.79" y="8.8" width="1.3" height="1.3" fill="#000000"/><rect x="573.36" y="7.4" width="1.4" height="1.4" fill="#e4eaf2"/><rect x="574.76" y="8.8" width="1.3" height="1.3" fill="#000000"/><rect x="579.33" y="7.4" width="1.4" height="1.4" fill="#e4eaf2"/><rect x="580.73" y="8.8" width="1.3" height="1.3" fill="#000000"/><rect x="585.30" y="7.4" width="1.4" height="1.4" fill="#e4eaf2"/><rect x="586.70" y="8.8" width="1.3" height="1.3" fill="#000000"/><rect x="591.27" y="7.4" width="1.4" height="1.4" fill="#e4eaf2"/><rect x="592.67" y="8.8" width="1.3" height="1.3" fill="#000000"/><rect x="597.24" y="7.4" width="1.4" height="1.4" fill="#e4eaf2"/><rect x="598.64" y="8.8" width="1.3" height="1.3" fill="#000000"/><rect x="603.21" y="7.4" width="1.4" height="1.4" fill="#e4eaf2"/><rect x="604.61" y="8.8" width="1.3" height="1.3" fill="#000000"/><rect x="609.18" y="7.4" width="1.4" height="1.4" fill="#e4eaf2"/><rect x="610.58" y="8.8" width="1.3" height="1.3" fill="#000000"/><rect x="615.15" y="7.4" width="1.4" height="1.4" fill="#e4eaf2"/><rect x="616.55" y="8.8" width="1.3" height="1.3" fill="#000000"/><rect x="621.12" y="7.4" width="1.4" height="1.4" fill="#e4eaf2"/><rect x="622.52" y="8.8" width="1.3" height="1.3" fill="#000000"/><rect x="627.09" y="7.4" width="1.4" height="1.4" fill="#e4eaf2"/><rect x="628.49" y="8.8" width="1.3" height="1.3" fill="#000000"/><rect x="633.06" y="7.4" width="1.4" height="1.4" fill="#e4eaf2"/><rect x="634.46" y="8.8" width="1.3" height="1.3" fill="#000000"/><rect x="639.03" y="7.4" width="1.4" height="1.4" fill="#e4eaf2"/><rect x="640.43" y="8.8" width="1.3" height="1.3" fill="#000000"/><rect x="645.00" y="7.4" width="1.4" height="1.4" fill="#e4eaf2"/><rect x="646.40" y="8.8" width="1.3" height="1.3" fill="#000000"/><rect x="650.97" y="7.4" width="1.4" height="1.4" fill="#e4eaf2"/><rect x="652.37" y="8.8" width="1.3" height="1.3" fill="#000000"/><rect x="656.94" y="7.4" width="1.4" height="1.4" fill="#e4eaf2"/><rect x="658.34" y="8.8" width="1.3" height="1.3" fill="#000000"/><rect x="662.91" y="7.4" width="1.4" height="1.4" fill="#e4eaf2"/><rect x="664.31" y="8.8" width="1.3" height="1.3" fill="#000000"/><rect x="668.88" y="7.4" width="1.4" height="1.4" fill="#e4eaf2"/><rect x="670.28" y="8.8" width="1.3" height="1.3" fill="#000000"/><rect x="674.85" y="7.4" width="1.4" height="1.4" fill="#e4eaf2"/><rect x="676.25" y="8.8" width="1.3" height="1.3" fill="#000000"/></svg>
<div style="position:absolute;left:0;top:0;width:10px;height:11px;background:#f4f4f8;border-right:1px solid #2020e0;border-bottom:1px solid #2020e0"></div>
<svg style="position:absolute;left:0;top:0" width="11" height="12"><path d="M2.6 8.5 L4.6 0" stroke="#90a8f0" stroke-width="0.8" fill="none"/><path d="M-0.8 2.6 C2.8 2.8 2.8 6.6 -0.8 7.4 M2.8 9 L5.6 2.7 L9.4 2.7 M4.6 5.5 L8.2 5.5" stroke="#1a2ee8" stroke-width="1.8" fill="none"/></svg>
<div style="position:absolute;left:0;top:13px;width:680px;height:1px;background:#e6e6e6"></div>
<div style="position:absolute;left:0;top:14px;width:45px;height:15px;background:#a3afbf"></div>
<div style="position:absolute;left:46px;top:14px;width:1px;height:15px;background:#f4f4f4"></div>
<div style="position:absolute;left:47px;top:14px;width:44px;height:15px;background:#d5d5d5"></div>
<div style="position:absolute;left:91px;top:15px;width:1px;height:13px;background:#8f9cb0"></div>
<div style="position:absolute;left:92px;top:15px;width:1px;height:14px;background:#f0f0f0"></div>
<div style="position:absolute;left:186px;top:43px;width:229px;height:13px;background:#fff;border:1px solid #667c9e;border-radius:2px;box-shadow:inset 0 1px 0 #b4c0d0"></div>
<div style="position:absolute;left:406px;top:45px;width:10px;height:12px;background:#d0d0d0"></div>
<svg style="position:absolute;left:406px;top:43px" width="10" height="15"><path d="M2 5.8 L8 5.8 L5 9.4 Z" fill="#52699a"/></svg>
<div style="position:absolute;left:454px;top:46px;width:7px;height:7px;background:#fafafa;border-top:1px solid #5c6474;border-left:1px solid #5c6474;border-right:1px solid #f0f0f0;border-bottom:1px solid #f0f0f0;box-shadow:inset 1px 1px 0 #a4aab4"></div>
<div style="position:absolute;left:506px;top:44px;width:44px;height:12px;background:#d6d6d6;border:1px solid #f2f2f2;border-right-color:#7f90aa;border-bottom-color:#7f90aa;border-radius:2px"></div>
<div style="position:absolute;left:563px;top:44px;width:44px;height:12px;background:#d6d6d6;border:1px solid #f2f2f2;border-right-color:#7f90aa;border-bottom-color:#7f90aa;border-radius:2px"></div>
<div style="position:absolute;left:620px;top:44px;width:44px;height:12px;background:#d6d6d6;border:1px solid #f2f2f2;border-right-color:#7f90aa;border-bottom-color:#7f90aa;border-radius:2px"></div>
<div style="position:absolute;left:185px;top:60px;width:417px;height:12px;background:#fff;border:1px solid #e03838"></div>
<div style="position:absolute;left:186px;top:91px;width:162px;height:13px;background:#fff;border:1px solid #667c9e;border-radius:2px;box-shadow:inset 0 1px 0 #b4c0d0"></div>
<div style="position:absolute;left:339px;top:93px;width:10px;height:12px;background:#d0d0d0"></div>
<svg style="position:absolute;left:339px;top:91px" width="10" height="15"><path d="M2 5.8 L8 5.8 L5 9.4 Z" fill="#52699a"/></svg>
<div style="position:absolute;left:366px;top:93px;width:7px;height:7px;background:#fafafa;border-top:1px solid #5c6474;border-left:1px solid #5c6474;border-right:1px solid #f0f0f0;border-bottom:1px solid #f0f0f0;box-shadow:inset 1px 1px 0 #a4aab4"></div>
<svg style="position:absolute;left:366px;top:93px" width="10" height="10"><path d="M2 4.8 L4.2 7.4 L8.2 2.9" stroke="#182034" stroke-width="2.1" fill="none"/></svg>
<div style="position:absolute;left:392px;top:93px;width:7px;height:7px;background:#fafafa;border-top:1px solid #5c6474;border-left:1px solid #5c6474;border-right:1px solid #f0f0f0;border-bottom:1px solid #f0f0f0;box-shadow:inset 1px 1px 0 #a4aab4"></div>
<svg style="position:absolute;left:392px;top:93px" width="10" height="10"><path d="M2 4.8 L4.2 7.4 L8.2 2.9" stroke="#182034" stroke-width="2.1" fill="none"/></svg>
<div style="position:absolute;left:423px;top:91px;width:210px;height:11px;background:#fff;border-top:1px solid #667c9e;border-left:1px solid #667c9e;border-right:1px solid #f6f6f6;border-bottom:1px solid #f6f6f6;border-radius:2px 2px 2px 1px;box-shadow:inset 1px 1px 0 #8fa0b8,inset -1px -1px 0 #e0e0e4"></div>
<div style="position:absolute;left:650px;top:93px;width:7px;height:7px;background:#fafafa;border-top:1px solid #5c6474;border-left:1px solid #5c6474;border-right:1px solid #f0f0f0;border-bottom:1px solid #f0f0f0;box-shadow:inset 1px 1px 0 #a4aab4"></div>
<div style="position:absolute;left:186px;top:107px;width:162px;height:12px;background:#fff;border:1px solid #667c9e;border-radius:2px;box-shadow:inset 0 1px 0 #b4c0d0"></div>
<div style="position:absolute;left:339px;top:109px;width:10px;height:11px;background:#d0d0d0"></div>
<svg style="position:absolute;left:339px;top:107px" width="10" height="14"><path d="M2 5.3 L8 5.3 L5 8.9 Z" fill="#52699a"/></svg>
<div style="position:absolute;left:366px;top:109px;width:7px;height:7px;background:#fafafa;border-top:1px solid #5c6474;border-left:1px solid #5c6474;border-right:1px solid #f0f0f0;border-bottom:1px solid #f0f0f0;box-shadow:inset 1px 1px 0 #a4aab4"></div>
<div style="position:absolute;left:392px;top:109px;width:7px;height:7px;background:#fafafa;border-top:1px solid #5c6474;border-left:1px solid #5c6474;border-right:1px solid #f0f0f0;border-bottom:1px solid #f0f0f0;box-shadow:inset 1px 1px 0 #a4aab4"></div>
<svg style="position:absolute;left:392px;top:109px" width="10" height="10"><path d="M2 4.8 L4.2 7.4 L8.2 2.9" stroke="#182034" stroke-width="2.1" fill="none"/></svg>
<div style="position:absolute;left:423px;top:107px;width:210px;height:11px;background:#fff;border-top:1px solid #667c9e;border-left:1px solid #667c9e;border-right:1px solid #f6f6f6;border-bottom:1px solid #f6f6f6;border-radius:2px 2px 2px 1px;box-shadow:inset 1px 1px 0 #8fa0b8,inset -1px -1px 0 #e0e0e4"></div>
<div style="position:absolute;left:650px;top:109px;width:7px;height:7px;background:#fafafa;border-top:1px solid #5c6474;border-left:1px solid #5c6474;border-right:1px solid #f0f0f0;border-bottom:1px solid #f0f0f0;box-shadow:inset 1px 1px 0 #a4aab4"></div>
<div style="position:absolute;left:186px;top:122px;width:162px;height:12px;background:#fff;border:1px solid #667c9e;border-radius:2px;box-shadow:inset 0 1px 0 #b4c0d0"></div>
<div style="position:absolute;left:339px;top:124px;width:10px;height:11px;background:#d0d0d0"></div>
<svg style="position:absolute;left:339px;top:122px" width="10" height="14"><path d="M2 5.3 L8 5.3 L5 8.9 Z" fill="#52699a"/></svg>
<div style="position:absolute;left:366px;top:124px;width:7px;height:7px;background:#fafafa;border-top:1px solid #5c6474;border-left:1px solid #5c6474;border-right:1px solid #f0f0f0;border-bottom:1px solid #f0f0f0;box-shadow:inset 1px 1px 0 #a4aab4"></div>
<div style="position:absolute;left:392px;top:124px;width:7px;height:7px;background:#fafafa;border-top:1px solid #5c6474;border-left:1px solid #5c6474;border-right:1px solid #f0f0f0;border-bottom:1px solid #f0f0f0;box-shadow:inset 1px 1px 0 #a4aab4"></div>
<div style="position:absolute;left:423px;top:122px;width:210px;height:11px;background:#fff;border-top:1px solid #667c9e;border-left:1px solid #667c9e;border-right:1px solid #f6f6f6;border-bottom:1px solid #f6f6f6;border-radius:2px 2px 2px 1px;box-shadow:inset 1px 1px 0 #8fa0b8,inset -1px -1px 0 #e0e0e4"></div>
<div style="position:absolute;left:650px;top:124px;width:7px;height:7px;background:#fafafa;border-top:1px solid #5c6474;border-left:1px solid #5c6474;border-right:1px solid #f0f0f0;border-bottom:1px solid #f0f0f0;box-shadow:inset 1px 1px 0 #a4aab4"></div>
<div style="position:absolute;left:186px;top:138px;width:162px;height:12px;background:#fff;border:1px solid #667c9e;border-radius:2px;box-shadow:inset 0 1px 0 #b4c0d0"></div>
<div style="position:absolute;left:339px;top:140px;width:10px;height:11px;background:#d0d0d0"></div>
<svg style="position:absolute;left:339px;top:138px" width="10" height="14"><path d="M2 5.3 L8 5.3 L5 8.9 Z" fill="#52699a"/></svg>
<div style="position:absolute;left:366px;top:140px;width:7px;height:7px;background:#fafafa;border-top:1px solid #5c6474;border-left:1px solid #5c6474;border-right:1px solid #f0f0f0;border-bottom:1px solid #f0f0f0;box-shadow:inset 1px 1px 0 #a4aab4"></div>
<div style="position:absolute;left:392px;top:140px;width:7px;height:7px;background:#fafafa;border-top:1px solid #5c6474;border-left:1px solid #5c6474;border-right:1px solid #f0f0f0;border-bottom:1px solid #f0f0f0;box-shadow:inset 1px 1px 0 #a4aab4"></div>
<div style="position:absolute;left:423px;top:138px;width:210px;height:11px;background:#fff;border-top:1px solid #667c9e;border-left:1px solid #667c9e;border-right:1px solid #f6f6f6;border-bottom:1px solid #f6f6f6;border-radius:2px 2px 2px 1px;box-shadow:inset 1px 1px 0 #8fa0b8,inset -1px -1px 0 #e0e0e4"></div>
<div style="position:absolute;left:650px;top:140px;width:7px;height:7px;background:#fafafa;border-top:1px solid #5c6474;border-left:1px solid #5c6474;border-right:1px solid #f0f0f0;border-bottom:1px solid #f0f0f0;box-shadow:inset 1px 1px 0 #a4aab4"></div>
<div style="position:absolute;left:186px;top:169px;width:162px;height:12px;background:#fff;border:1px solid #667c9e;border-radius:2px;box-shadow:inset 0 1px 0 #b4c0d0"></div>
<div style="position:absolute;left:339px;top:171px;width:10px;height:11px;background:#d0d0d0"></div>
<svg style="position:absolute;left:339px;top:169px" width="10" height="14"><path d="M2 5.3 L8 5.3 L5 8.9 Z" fill="#52699a"/></svg>
<div style="position:absolute;left:366px;top:169px;width:13px;height:11px;background:#fff;border-top:1px solid #667c9e;border-left:1px solid #667c9e;border-right:1px solid #f6f6f6;border-bottom:1px solid #f6f6f6;border-radius:2px 2px 2px 1px;box-shadow:inset 1px 1px 0 #8fa0b8,inset -1px -1px 0 #e0e0e4"></div>
<div style="position:absolute;left:423px;top:169px;width:210px;height:11px;background:#fff;border-top:1px solid #667c9e;border-left:1px solid #667c9e;border-right:1px solid #f6f6f6;border-bottom:1px solid #f6f6f6;border-radius:2px 2px 2px 1px;box-shadow:inset 1px 1px 0 #8fa0b8,inset -1px -1px 0 #e0e0e4"></div>
<div style="position:absolute;left:650px;top:171px;width:7px;height:7px;background:#fafafa;border-top:1px solid #5c6474;border-left:1px solid #5c6474;border-right:1px solid #f0f0f0;border-bottom:1px solid #f0f0f0;box-shadow:inset 1px 1px 0 #a4aab4"></div>
<div style="position:absolute;left:186px;top:184px;width:162px;height:12px;background:#fff;border:1px solid #667c9e;border-radius:2px;box-shadow:inset 0 1px 0 #b4c0d0"></div>
<div style="position:absolute;left:339px;top:186px;width:10px;height:11px;background:#d0d0d0"></div>
<svg style="position:absolute;left:339px;top:184px" width="10" height="14"><path d="M2 5.3 L8 5.3 L5 8.9 Z" fill="#52699a"/></svg>
<div style="position:absolute;left:366px;top:184px;width:13px;height:11px;background:#fff;border-top:1px solid #667c9e;border-left:1px solid #667c9e;border-right:1px solid #f6f6f6;border-bottom:1px solid #f6f6f6;border-radius:2px 2px 2px 1px;box-shadow:inset 1px 1px 0 #8fa0b8,inset -1px -1px 0 #e0e0e4"></div>
<div style="position:absolute;left:423px;top:184px;width:210px;height:11px;background:#fff;border-top:1px solid #667c9e;border-left:1px solid #667c9e;border-right:1px solid #f6f6f6;border-bottom:1px solid #f6f6f6;border-radius:2px 2px 2px 1px;box-shadow:inset 1px 1px 0 #8fa0b8,inset -1px -1px 0 #e0e0e4"></div>
<div style="position:absolute;left:650px;top:186px;width:7px;height:7px;background:#fafafa;border-top:1px solid #5c6474;border-left:1px solid #5c6474;border-right:1px solid #f0f0f0;border-bottom:1px solid #f0f0f0;box-shadow:inset 1px 1px 0 #a4aab4"></div>
<div style="position:absolute;left:186px;top:200px;width:162px;height:12px;background:#fff;border:1px solid #667c9e;border-radius:2px;box-shadow:inset 0 1px 0 #b4c0d0"></div>
<div style="position:absolute;left:339px;top:202px;width:10px;height:11px;background:#d0d0d0"></div>
<svg style="position:absolute;left:339px;top:200px" width="10" height="14"><path d="M2 5.3 L8 5.3 L5 8.9 Z" fill="#52699a"/></svg>
<div style="position:absolute;left:366px;top:200px;width:13px;height:11px;background:#fff;border-top:1px solid #667c9e;border-left:1px solid #667c9e;border-right:1px solid #f6f6f6;border-bottom:1px solid #f6f6f6;border-radius:2px 2px 2px 1px;box-shadow:inset 1px 1px 0 #8fa0b8,inset -1px -1px 0 #e0e0e4"></div>
<div style="position:absolute;left:423px;top:200px;width:210px;height:11px;background:#fff;border-top:1px solid #667c9e;border-left:1px solid #667c9e;border-right:1px solid #f6f6f6;border-bottom:1px solid #f6f6f6;border-radius:2px 2px 2px 1px;box-shadow:inset 1px 1px 0 #8fa0b8,inset -1px -1px 0 #e0e0e4"></div>
<div style="position:absolute;left:650px;top:202px;width:7px;height:7px;background:#fafafa;border-top:1px solid #5c6474;border-left:1px solid #5c6474;border-right:1px solid #f0f0f0;border-bottom:1px solid #f0f0f0;box-shadow:inset 1px 1px 0 #a4aab4"></div>
<div style="position:absolute;left:186px;top:215px;width:162px;height:12px;background:#fff;border:1px solid #667c9e;border-radius:2px;box-shadow:inset 0 1px 0 #b4c0d0"></div>
<div style="position:absolute;left:339px;top:217px;width:10px;height:11px;background:#d0d0d0"></div>
<svg style="position:absolute;left:339px;top:215px" width="10" height="14"><path d="M2 5.3 L8 5.3 L5 8.9 Z" fill="#52699a"/></svg>
<div style="position:absolute;left:366px;top:215px;width:13px;height:11px;background:#fff;border-top:1px solid #667c9e;border-left:1px solid #667c9e;border-right:1px solid #f6f6f6;border-bottom:1px solid #f6f6f6;border-radius:2px 2px 2px 1px;box-shadow:inset 1px 1px 0 #8fa0b8,inset -1px -1px 0 #e0e0e4"></div>
<div style="position:absolute;left:423px;top:215px;width:210px;height:11px;background:#fff;border-top:1px solid #667c9e;border-left:1px solid #667c9e;border-right:1px solid #f6f6f6;border-bottom:1px solid #f6f6f6;border-radius:2px 2px 2px 1px;box-shadow:inset 1px 1px 0 #8fa0b8,inset -1px -1px 0 #e0e0e4"></div>
<div style="position:absolute;left:650px;top:217px;width:7px;height:7px;background:#fafafa;border-top:1px solid #5c6474;border-left:1px solid #5c6474;border-right:1px solid #f0f0f0;border-bottom:1px solid #f0f0f0;box-shadow:inset 1px 1px 0 #a4aab4"></div>
<div style="position:absolute;left:186px;top:231px;width:162px;height:12px;background:#fff;border:1px solid #667c9e;border-radius:2px;box-shadow:inset 0 1px 0 #b4c0d0"></div>
<div style="position:absolute;left:339px;top:233px;width:10px;height:11px;background:#d0d0d0"></div>
<svg style="position:absolute;left:339px;top:231px" width="10" height="14"><path d="M2 5.3 L8 5.3 L5 8.9 Z" fill="#52699a"/></svg>
<div style="position:absolute;left:366px;top:231px;width:13px;height:11px;background:#fff;border-top:1px solid #667c9e;border-left:1px solid #667c9e;border-right:1px solid #f6f6f6;border-bottom:1px solid #f6f6f6;border-radius:2px 2px 2px 1px;box-shadow:inset 1px 1px 0 #8fa0b8,inset -1px -1px 0 #e0e0e4"></div>
<div style="position:absolute;left:423px;top:231px;width:210px;height:11px;background:#fff;border-top:1px solid #667c9e;border-left:1px solid #667c9e;border-right:1px solid #f6f6f6;border-bottom:1px solid #f6f6f6;border-radius:2px 2px 2px 1px;box-shadow:inset 1px 1px 0 #8fa0b8,inset -1px -1px 0 #e0e0e4"></div>
<div style="position:absolute;left:650px;top:233px;width:7px;height:7px;background:#fafafa;border-top:1px solid #5c6474;border-left:1px solid #5c6474;border-right:1px solid #f0f0f0;border-bottom:1px solid #f0f0f0;box-shadow:inset 1px 1px 0 #a4aab4"></div>
<div style="position:absolute;left:186px;top:246px;width:162px;height:12px;background:#fff;border:1px solid #667c9e;border-radius:2px;box-shadow:inset 0 1px 0 #b4c0d0"></div>
<div style="position:absolute;left:339px;top:248px;width:10px;height:11px;background:#d0d0d0"></div>
<svg style="position:absolute;left:339px;top:246px" width="10" height="14"><path d="M2 5.3 L8 5.3 L5 8.9 Z" fill="#52699a"/></svg>
<div style="position:absolute;left:366px;top:246px;width:13px;height:11px;background:#fff;border-top:1px solid #667c9e;border-left:1px solid #667c9e;border-right:1px solid #f6f6f6;border-bottom:1px solid #f6f6f6;border-radius:2px 2px 2px 1px;box-shadow:inset 1px 1px 0 #8fa0b8,inset -1px -1px 0 #e0e0e4"></div>
<div style="position:absolute;left:423px;top:246px;width:210px;height:11px;background:#fff;border-top:1px solid #667c9e;border-left:1px solid #667c9e;border-right:1px solid #f6f6f6;border-bottom:1px solid #f6f6f6;border-radius:2px 2px 2px 1px;box-shadow:inset 1px 1px 0 #8fa0b8,inset -1px -1px 0 #e0e0e4"></div>
<div style="position:absolute;left:650px;top:248px;width:7px;height:7px;background:#fafafa;border-top:1px solid #5c6474;border-left:1px solid #5c6474;border-right:1px solid #f0f0f0;border-bottom:1px solid #f0f0f0;box-shadow:inset 1px 1px 0 #a4aab4"></div>
<div style="position:absolute;left:186px;top:262px;width:162px;height:12px;background:#fff;border:1px solid #667c9e;border-radius:2px;box-shadow:inset 0 1px 0 #b4c0d0"></div>
<div style="position:absolute;left:339px;top:264px;width:10px;height:11px;background:#d0d0d0"></div>
<svg style="position:absolute;left:339px;top:262px" width="10" height="14"><path d="M2 5.3 L8 5.3 L5 8.9 Z" fill="#52699a"/></svg>
<div style="position:absolute;left:366px;top:262px;width:13px;height:11px;background:#fff;border-top:1px solid #667c9e;border-left:1px solid #667c9e;border-right:1px solid #f6f6f6;border-bottom:1px solid #f6f6f6;border-radius:2px 2px 2px 1px;box-shadow:inset 1px 1px 0 #8fa0b8,inset -1px -1px 0 #e0e0e4"></div>
<div style="position:absolute;left:423px;top:262px;width:210px;height:11px;background:#fff;border-top:1px solid #667c9e;border-left:1px solid #667c9e;border-right:1px solid #f6f6f6;border-bottom:1px solid #f6f6f6;border-radius:2px 2px 2px 1px;box-shadow:inset 1px 1px 0 #8fa0b8,inset -1px -1px 0 #e0e0e4"></div>
<div style="position:absolute;left:650px;top:264px;width:7px;height:7px;background:#fafafa;border-top:1px solid #5c6474;border-left:1px solid #5c6474;border-right:1px solid #f0f0f0;border-bottom:1px solid #f0f0f0;box-shadow:inset 1px 1px 0 #a4aab4"></div>
<div style="position:absolute;left:186px;top:277px;width:162px;height:12px;background:#fff;border:1px solid #667c9e;border-radius:2px;box-shadow:inset 0 1px 0 #b4c0d0"></div>
<div style="position:absolute;left:339px;top:279px;width:10px;height:11px;background:#d0d0d0"></div>
<svg style="position:absolute;left:339px;top:277px" width="10" height="14"><path d="M2 5.3 L8 5.3 L5 8.9 Z" fill="#52699a"/></svg>
<div style="position:absolute;left:366px;top:277px;width:13px;height:11px;background:#fff;border-top:1px solid #667c9e;border-left:1px solid #667c9e;border-right:1px solid #f6f6f6;border-bottom:1px solid #f6f6f6;border-radius:2px 2px 2px 1px;box-shadow:inset 1px 1px 0 #8fa0b8,inset -1px -1px 0 #e0e0e4"></div>
<div style="position:absolute;left:423px;top:277px;width:210px;height:11px;background:#fff;border-top:1px solid #667c9e;border-left:1px solid #667c9e;border-right:1px solid #f6f6f6;border-bottom:1px solid #f6f6f6;border-radius:2px 2px 2px 1px;box-shadow:inset 1px 1px 0 #8fa0b8,inset -1px -1px 0 #e0e0e4"></div>
<div style="position:absolute;left:650px;top:279px;width:7px;height:7px;background:#fafafa;border-top:1px solid #5c6474;border-left:1px solid #5c6474;border-right:1px solid #f0f0f0;border-bottom:1px solid #f0f0f0;box-shadow:inset 1px 1px 0 #a4aab4"></div>
<div style="position:absolute;left:186px;top:293px;width:162px;height:12px;background:#fff;border:1px solid #667c9e;border-radius:2px;box-shadow:inset 0 1px 0 #b4c0d0"></div>
<div style="position:absolute;left:339px;top:295px;width:10px;height:11px;background:#d0d0d0"></div>
<svg style="position:absolute;left:339px;top:293px" width="10" height="14"><path d="M2 5.3 L8 5.3 L5 8.9 Z" fill="#52699a"/></svg>
<div style="position:absolute;left:366px;top:293px;width:13px;height:11px;background:#fff;border-top:1px solid #667c9e;border-left:1px solid #667c9e;border-right:1px solid #f6f6f6;border-bottom:1px solid #f6f6f6;border-radius:2px 2px 2px 1px;box-shadow:inset 1px 1px 0 #8fa0b8,inset -1px -1px 0 #e0e0e4"></div>
<div style="position:absolute;left:423px;top:293px;width:210px;height:11px;background:#fff;border-top:1px solid #667c9e;border-left:1px solid #667c9e;border-right:1px solid #f6f6f6;border-bottom:1px solid #f6f6f6;border-radius:2px 2px 2px 1px;box-shadow:inset 1px 1px 0 #8fa0b8,inset -1px -1px 0 #e0e0e4"></div>
<div style="position:absolute;left:650px;top:295px;width:7px;height:7px;background:#fafafa;border-top:1px solid #5c6474;border-left:1px solid #5c6474;border-right:1px solid #f0f0f0;border-bottom:1px solid #f0f0f0;box-shadow:inset 1px 1px 0 #a4aab4"></div>
<div style="position:absolute;left:186px;top:308px;width:162px;height:12px;background:#fff;border:1px solid #667c9e;border-radius:2px;box-shadow:inset 0 1px 0 #b4c0d0"></div>
<div style="position:absolute;left:339px;top:310px;width:10px;height:11px;background:#d0d0d0"></div>
<svg style="position:absolute;left:339px;top:308px" width="10" height="14"><path d="M2 5.3 L8 5.3 L5 8.9 Z" fill="#52699a"/></svg>
<div style="position:absolute;left:366px;top:308px;width:13px;height:11px;background:#fff;border-top:1px solid #667c9e;border-left:1px solid #667c9e;border-right:1px solid #f6f6f6;border-bottom:1px solid #f6f6f6;border-radius:2px 2px 2px 1px;box-shadow:inset 1px 1px 0 #8fa0b8,inset -1px -1px 0 #e0e0e4"></div>
<div style="position:absolute;left:423px;top:308px;width:210px;height:11px;background:#fff;border-top:1px solid #667c9e;border-left:1px solid #667c9e;border-right:1px solid #f6f6f6;border-bottom:1px solid #f6f6f6;border-radius:2px 2px 2px 1px;box-shadow:inset 1px 1px 0 #8fa0b8,inset -1px -1px 0 #e0e0e4"></div>
<div style="position:absolute;left:650px;top:310px;width:7px;height:7px;background:#fafafa;border-top:1px solid #5c6474;border-left:1px solid #5c6474;border-right:1px solid #f0f0f0;border-bottom:1px solid #f0f0f0;box-shadow:inset 1px 1px 0 #a4aab4"></div>
<div style="position:absolute;left:186px;top:324px;width:162px;height:12px;background:#fff;border:1px solid #667c9e;border-radius:2px;box-shadow:inset 0 1px 0 #b4c0d0"></div>
<div style="position:absolute;left:339px;top:326px;width:10px;height:11px;background:#d0d0d0"></div>
<svg style="position:absolute;left:339px;top:324px" width="10" height="14"><path d="M2 5.3 L8 5.3 L5 8.9 Z" fill="#52699a"/></svg>
<div style="position:absolute;left:366px;top:324px;width:13px;height:11px;background:#fff;border-top:1px solid #667c9e;border-left:1px solid #667c9e;border-right:1px solid #f6f6f6;border-bottom:1px solid #f6f6f6;border-radius:2px 2px 2px 1px;box-shadow:inset 1px 1px 0 #8fa0b8,inset -1px -1px 0 #e0e0e4"></div>
<div style="position:absolute;left:423px;top:324px;width:210px;height:11px;background:#fff;border-top:1px solid #667c9e;border-left:1px solid #667c9e;border-right:1px solid #f6f6f6;border-bottom:1px solid #f6f6f6;border-radius:2px 2px 2px 1px;box-shadow:inset 1px 1px 0 #8fa0b8,inset -1px -1px 0 #e0e0e4"></div>
<div style="position:absolute;left:650px;top:326px;width:7px;height:7px;background:#fafafa;border-top:1px solid #5c6474;border-left:1px solid #5c6474;border-right:1px solid #f0f0f0;border-bottom:1px solid #f0f0f0;box-shadow:inset 1px 1px 0 #a4aab4"></div>
<div style="position:absolute;left:186px;top:339px;width:162px;height:12px;background:#fff;border:1px solid #667c9e;border-radius:2px;box-shadow:inset 0 1px 0 #b4c0d0"></div>
<div style="position:absolute;left:339px;top:341px;width:10px;height:11px;background:#d0d0d0"></div>
<svg style="position:absolute;left:339px;top:339px" width="10" height="14"><path d="M2 5.3 L8 5.3 L5 8.9 Z" fill="#52699a"/></svg>
<div style="position:absolute;left:366px;top:339px;width:13px;height:11px;background:#fff;border-top:1px solid #667c9e;border-left:1px solid #667c9e;border-right:1px solid #f6f6f6;border-bottom:1px solid #f6f6f6;border-radius:2px 2px 2px 1px;box-shadow:inset 1px 1px 0 #8fa0b8,inset -1px -1px 0 #e0e0e4"></div>
<div style="position:absolute;left:423px;top:339px;width:210px;height:11px;background:#fff;border-top:1px solid #667c9e;border-left:1px solid #667c9e;border-right:1px solid #f6f6f6;border-bottom:1px solid #f6f6f6;border-radius:2px 2px 2px 1px;box-shadow:inset 1px 1px 0 #8fa0b8,inset -1px -1px 0 #e0e0e4"></div>
<div style="position:absolute;left:650px;top:341px;width:7px;height:7px;background:#fafafa;border-top:1px solid #5c6474;border-left:1px solid #5c6474;border-right:1px solid #f0f0f0;border-bottom:1px solid #f0f0f0;box-shadow:inset 1px 1px 0 #a4aab4"></div>
<div style="position:absolute;left:186px;top:355px;width:162px;height:12px;background:#fff;border:1px solid #667c9e;border-radius:2px;box-shadow:inset 0 1px 0 #b4c0d0"></div>
<div style="position:absolute;left:339px;top:357px;width:10px;height:11px;background:#d0d0d0"></div>
<svg style="position:absolute;left:339px;top:355px" width="10" height="14"><path d="M2 5.3 L8 5.3 L5 8.9 Z" fill="#52699a"/></svg>
<div style="position:absolute;left:366px;top:355px;width:13px;height:11px;background:#fff;border-top:1px solid #667c9e;border-left:1px solid #667c9e;border-right:1px solid #f6f6f6;border-bottom:1px solid #f6f6f6;border-radius:2px 2px 2px 1px;box-shadow:inset 1px 1px 0 #8fa0b8,inset -1px -1px 0 #e0e0e4"></div>
<div style="position:absolute;left:423px;top:355px;width:210px;height:11px;background:#fff;border-top:1px solid #667c9e;border-left:1px solid #667c9e;border-right:1px solid #f6f6f6;border-bottom:1px solid #f6f6f6;border-radius:2px 2px 2px 1px;box-shadow:inset 1px 1px 0 #8fa0b8,inset -1px -1px 0 #e0e0e4"></div>
<div style="position:absolute;left:650px;top:357px;width:7px;height:7px;background:#fafafa;border-top:1px solid #5c6474;border-left:1px solid #5c6474;border-right:1px solid #f0f0f0;border-bottom:1px solid #f0f0f0;box-shadow:inset 1px 1px 0 #a4aab4"></div>
<div style="position:absolute;left:186px;top:370px;width:162px;height:12px;background:#fff;border:1px solid #667c9e;border-radius:2px;box-shadow:inset 0 1px 0 #b4c0d0"></div>
<div style="position:absolute;left:339px;top:372px;width:10px;height:11px;background:#d0d0d0"></div>
<svg style="position:absolute;left:339px;top:370px" width="10" height="14"><path d="M2 5.3 L8 5.3 L5 8.9 Z" fill="#52699a"/></svg>
<div style="position:absolute;left:366px;top:370px;width:13px;height:11px;background:#fff;border-top:1px solid #667c9e;border-left:1px solid #667c9e;border-right:1px solid #f6f6f6;border-bottom:1px solid #f6f6f6;border-radius:2px 2px 2px 1px;box-shadow:inset 1px 1px 0 #8fa0b8,inset -1px -1px 0 #e0e0e4"></div>
<div style="position:absolute;left:423px;top:370px;width:210px;height:11px;background:#fff;border-top:1px solid #667c9e;border-left:1px solid #667c9e;border-right:1px solid #f6f6f6;border-bottom:1px solid #f6f6f6;border-radius:2px 2px 2px 1px;box-shadow:inset 1px 1px 0 #8fa0b8,inset -1px -1px 0 #e0e0e4"></div>
<div style="position:absolute;left:650px;top:372px;width:7px;height:7px;background:#fafafa;border-top:1px solid #5c6474;border-left:1px solid #5c6474;border-right:1px solid #f0f0f0;border-bottom:1px solid #f0f0f0;box-shadow:inset 1px 1px 0 #a4aab4"></div>
<div style="position:absolute;left:186px;top:386px;width:29px;height:12px;background:#fff;border-top:1px solid #667c9e;border-left:1px solid #667c9e;border-right:1px solid #f6f6f6;border-bottom:1px solid #f6f6f6;border-radius:2px 2px 2px 1px;box-shadow:inset 1px 1px 0 #8fa0b8,inset -1px -1px 0 #e0e0e4"></div>
<div style="position:absolute;left:186px;top:402px;width:60px;height:11px;background:#fff;border-top:1px solid #667c9e;border-left:1px solid #667c9e;border-right:1px solid #f6f6f6;border-bottom:1px solid #f6f6f6;border-radius:2px 2px 2px 1px;box-shadow:inset 1px 1px 0 #8fa0b8,inset -1px -1px 0 #e0e0e4"></div>
<div style="position:absolute;left:186px;top:417px;width:209px;height:12px;background:#fff;border-top:1px solid #667c9e;border-left:1px solid #667c9e;border-right:1px solid #f6f6f6;border-bottom:1px solid #f6f6f6;border-radius:2px 2px 2px 1px;box-shadow:inset 1px 1px 0 #8fa0b8,inset -1px -1px 0 #e0e0e4"></div>
<svg style="position:absolute;left:399px;top:417px" width="11" height="14"><rect x="0" y="0" width="11" height="14" fill="#f0f0f0"/><rect x="10" y="0" width="1" height="14" fill="#8a98b0"/><rect x="0" y="13" width="11" height="1" fill="#a8b4c4"/><rect x="2" y="1.5" width="1.3" height="11" fill="#000"/><rect x="2" y="1.5" width="7.6" height="1.1" fill="#000018"/><rect x="2.8" y="2.6" width="6.8" height="1" fill="#4060e0"/><rect x="2" y="4.2" width="7.6" height="1.1" fill="#000018"/><rect x="2.8" y="5.3" width="6.8" height="1" fill="#4060e0"/><rect x="2" y="6.9" width="7.6" height="1.1" fill="#000018"/><rect x="2.8" y="8.0" width="6.8" height="1" fill="#4060e0"/><rect x="2" y="9.6" width="7.6" height="1.1" fill="#000018"/><rect x="2.8" y="10.7" width="6.8" height="1" fill="#4060e0"/></svg>
<div style="position:absolute;left:361px;top:386px;width:18px;height:12px;background:#dadada;border-top:1px solid #667c9e;border-left:1px solid #667c9e;border-right:1px solid #f6f6f6;border-bottom:1px solid #f6f6f6;border-radius:2px 2px 2px 1px;box-shadow:inset 1px 1px 0 #8fa0b8,inset -1px -1px 0 #e0e0e4"></div>
<div style="position:absolute;left:376px;top:404px;width:7px;height:7px;background:#fafafa;border-top:1px solid #5c6474;border-left:1px solid #5c6474;border-right:1px solid #f0f0f0;border-bottom:1px solid #f0f0f0;box-shadow:inset 1px 1px 0 #a4aab4"></div>
<svg style="position:absolute;left:376px;top:404px" width="10" height="10"><path d="M2 4.8 L4.2 7.4 L8.2 2.9" stroke="#182034" stroke-width="2.1" fill="none"/></svg>
<div style="position:absolute;left:460px;top:386px;width:76px;height:13px;background:#fff;border:1px solid #667c9e;border-radius:2px;box-shadow:inset 0 1px 0 #b4c0d0"></div>
<div style="position:absolute;left:527px;top:388px;width:10px;height:12px;background:#d0d0d0"></div>
<svg style="position:absolute;left:527px;top:386px" width="10" height="15"><path d="M2 5.8 L8 5.8 L5 9.4 Z" fill="#52699a"/></svg>
<div style="position:absolute;left:460px;top:401px;width:44px;height:13px;background:#fff;border:1px solid #667c9e;border-radius:2px;box-shadow:inset 0 1px 0 #b4c0d0"></div>
<div style="position:absolute;left:495px;top:403px;width:10px;height:12px;background:#d0d0d0"></div>
<svg style="position:absolute;left:495px;top:401px" width="10" height="15"><path d="M2 5.8 L8 5.8 L5 9.4 Z" fill="#52699a"/></svg>
<div style="position:absolute;left:423px;top:416px;width:91px;height:13px;background:#fff;border:1px solid #667c9e;border-radius:2px;box-shadow:inset 0 1px 0 #b4c0d0"></div>
<div style="position:absolute;left:505px;top:418px;width:10px;height:12px;background:#d0d0d0"></div>
<svg style="position:absolute;left:505px;top:416px" width="10" height="15"><path d="M2 5.8 L8 5.8 L5 9.4 Z" fill="#52699a"/></svg>
<div style="position:absolute;left:579px;top:386px;width:24px;height:13px;background:#d6d6d6;border:1px solid #f2f2f2;border-right-color:#7f90aa;border-bottom-color:#7f90aa;border-radius:2px"></div>
<div style="position:absolute;left:605px;top:386px;width:24px;height:13px;background:#d6d6d6;border:1px solid #f2f2f2;border-right-color:#7f90aa;border-bottom-color:#7f90aa;border-radius:2px"></div>
<svg style="position:absolute;left:579px;top:386px" width="52" height="15"><path d="M7.5 10 L12.5 5 L17.5 10 Z" fill="#000"/><path d="M33.5 5 L38.5 10 L43.5 5 Z" fill="#000"/></svg>
<svg style="position:absolute;left:0;top:200px" width="50" height="66">
<defs><filter id="bl" x="-20%" y="-20%" width="140%" height="140%"><feGaussianBlur stdDeviation="0.55"/></filter>
<radialGradient id="bg1" cx="0.6" cy="0.4" r="0.7"><stop offset="0" stop-color="#3aa4e4"/><stop offset="1" stop-color="#1878c0"/></radialGradient>
<linearGradient id="lg1" x1="0" x2="1"><stop offset="0" stop-color="#7a9ed2"/><stop offset="0.35" stop-color="#5b87c6"/></linearGradient></defs>
<g filter="url(#bl)">
<path d="M24 35 L23 45.5" stroke="#b4c0d2" stroke-width="1.5"/>
<ellipse cx="20" cy="52.5" rx="4" ry="6" fill="#b8c8e0" opacity="0.6"/>
<ellipse cx="13.6" cy="20.2" rx="9.8" ry="7.8" fill="url(#lg1)"/>
<path d="M12 9 C18 6 30 5.5 37 7 C44 9 46.5 15 46 21 C45.5 26 41 29.5 35.5 31.5 C31 33 27 34 24 35 C25.5 29 26.5 20 24.5 15 C22 11 17 9.5 12 9 Z" fill="#5b87c6"/>
<path d="M13 9.6 C18 10 22.5 12 24 16.5 C25.2 21 25 28 24 33.5" stroke="#cdd6e2" stroke-width="1.7" fill="none"/>
<circle cx="27" cy="52.5" r="8" fill="url(#bg1)"/>
<ellipse cx="29.5" cy="48.5" rx="2.6" ry="1.4" fill="#6ac6f2" transform="rotate(-25 29.5 48.5)"/><ellipse cx="24" cy="52" rx="2.2" ry="1.2" fill="#58b8ec" transform="rotate(-30 24 52)"/><ellipse cx="30.5" cy="54.5" rx="2.4" ry="1.2" fill="#58b8ec" transform="rotate(-35 30.5 54.5)"/><ellipse cx="25" cy="57" rx="2" ry="1" fill="#48a8e0"/>
</g></svg>
<div style="position:absolute;left:12.62px;top:-1.27px;font-size:10px;line-height:14px;font-weight:normal;color:#eef0f6;-webkit-text-stroke:0.25px #eef0f6;white-space:pre;transform:scaleX(0.882);transform-origin:0 0">/05813 - (RJ_MJINVS)</div>
<div style="position:absolute;left:3.28px;top:14.71px;font-size:9.5px;line-height:14px;font-weight:normal;color:#101018;-webkit-text-stroke:0.3px #101018;white-space:pre;transform:scaleX(0.834);transform-origin:0 0">Parametry</div>
<div style="position:absolute;left:56.19px;top:14.71px;font-size:9.5px;line-height:14px;font-weight:normal;color:#000;-webkit-text-stroke:0.25px #000;white-space:pre;transform:scaleX(0.847);transform-origin:0 0">Sloupce</div>
<div style="position:absolute;left:161.00px;top:43.51px;font-size:9.5px;line-height:14px;font-weight:bold;color:#000;-webkit-text-stroke:0.3px #000;white-space:pre;transform:scaleX(0.924);transform-origin:0 0">Vzor:</div>
<div style="position:absolute;left:187.97px;top:43.51px;font-size:9.5px;line-height:14px;font-weight:normal;color:#000;-webkit-text-stroke:0.15px #000;white-space:pre;transform:scaleX(0.855);transform-origin:0 0">Účetní součtový přehled</div>
<div style="position:absolute;left:281.95px;top:43.85px;font-size:8.5px;line-height:14px;font-weight:normal;color:#000;-webkit-text-stroke:0.15px #000;white-space:pre;transform:scaleX(1.105);transform-origin:0 0">()</div>
<div style="position:absolute;left:294.32px;top:43.51px;font-size:9.5px;line-height:14px;font-weight:normal;color:#000;-webkit-text-stroke:0.15px #000;white-space:pre;transform:scaleX(0.854);transform-origin:0 0">[Systémové]</div>
<div style="position:absolute;left:467.30px;top:44.51px;font-size:9.5px;line-height:14px;font-weight:bold;color:#000;-webkit-text-stroke:0.3px #000;white-space:pre;transform:scaleX(0.947);transform-origin:0 0">Veřejný</div>
<div style="position:absolute;left:518.61px;top:43.51px;font-size:9.5px;line-height:14px;font-weight:bold;color:#7f90ae;text-shadow:0.8px 0.8px 0 #f4f4f4;white-space:pre;transform:scaleX(0.788);transform-origin:0 0">Uložit</div>
<div style="position:absolute;left:566.91px;top:43.51px;font-size:9.5px;line-height:14px;font-weight:bold;color:#000;-webkit-text-stroke:0.1px #000;white-space:pre;transform:scaleX(0.772);transform-origin:0 0">Uložit jako</div>
<div style="position:absolute;left:626.11px;top:43.51px;font-size:9.5px;line-height:14px;font-weight:bold;color:#7f90ae;text-shadow:0.8px 0.8px 0 #f4f4f4;white-space:pre;transform:scaleX(0.771);transform-origin:0 0">Odstranit</div>
<div style="position:absolute;left:122.36px;top:59.51px;font-size:9.5px;line-height:14px;font-weight:bold;color:#000;-webkit-text-stroke:0.3px #000;white-space:pre;transform:scaleX(0.884);transform-origin:0 0">Název sestavy:</div>
<div style="position:absolute;left:187.08px;top:59.51px;font-size:9.5px;line-height:14px;font-weight:normal;color:#000;-webkit-text-stroke:0.15px #000;white-space:pre;transform:scaleX(0.848);transform-origin:0 0">Účetní součtový přehled</div>
<div style="position:absolute;left:338.80px;top:75.51px;font-size:9.5px;line-height:14px;font-weight:bold;color:#000;-webkit-text-stroke:0.3px #000;white-space:pre;transform:scaleX(0.875);transform-origin:0 0">Stránkovat</div>
<div style="position:absolute;left:387.00px;top:75.51px;font-size:9.5px;line-height:14px;font-weight:bold;color:#000;-webkit-text-stroke:0.3px #000;white-space:pre;transform:scaleX(0.847);transform-origin:0 0">Součet</div>
<div style="position:absolute;left:422.15px;top:75.51px;font-size:9.5px;line-height:14px;font-weight:bold;color:#000;-webkit-text-stroke:0.3px #000;white-space:pre;transform:scaleX(0.895);transform-origin:0 0">Název skupiny</div>
<div style="position:absolute;left:639.10px;top:75.51px;font-size:9.5px;line-height:14px;font-weight:bold;color:#000;-webkit-text-stroke:0.3px #000;white-space:pre;transform:scaleX(0.896);transform-origin:0 0">Sestupně</div>
<div style="position:absolute;left:141.80px;top:90.51px;font-size:9.5px;line-height:14px;font-weight:bold;color:#000;-webkit-text-stroke:0.3px #000;white-space:pre;transform:scaleX(0.855);transform-origin:0 0">Skupina 1:</div>
<div style="position:absolute;left:188.88px;top:91.51px;font-size:9.5px;line-height:14px;font-weight:normal;color:#000;-webkit-text-stroke:0.15px #000;white-space:pre;transform:scaleX(0.834);transform-origin:0 0">Číslo a název střediska</div>
<div style="position:absolute;left:425.08px;top:90.51px;font-size:9.5px;line-height:14px;font-weight:normal;color:#000;-webkit-text-stroke:0.15px #000;white-space:pre;transform:scaleX(0.841);transform-origin:0 0">Středisko</div>
<div style="position:absolute;left:141.80px;top:106.51px;font-size:9.5px;line-height:14px;font-weight:bold;color:#000;-webkit-text-stroke:0.3px #000;white-space:pre;transform:scaleX(0.855);transform-origin:0 0">Skupina 2:</div>
<div style="position:absolute;left:188.48px;top:107.51px;font-size:9.5px;line-height:14px;font-weight:normal;color:#000;-webkit-text-stroke:0.15px #000;white-space:pre;transform:scaleX(0.840);transform-origin:0 0">Účetní typ</div>
<div style="position:absolute;left:425.29px;top:106.51px;font-size:9.5px;line-height:14px;font-weight:normal;color:#000;-webkit-text-stroke:0.15px #000;white-space:pre;transform:scaleX(0.826);transform-origin:0 0">Účetní typ</div>
<div style="position:absolute;left:141.80px;top:121.51px;font-size:9.5px;line-height:14px;font-weight:bold;color:#000;-webkit-text-stroke:0.3px #000;white-space:pre;transform:scaleX(0.855);transform-origin:0 0">Skupina 3:</div>
<div style="position:absolute;left:188.67px;top:122.51px;font-size:9.5px;line-height:14px;font-weight:normal;color:#000;-webkit-text-stroke:0.15px #000;white-space:pre;transform:scaleX(0.846);transform-origin:0 0">Neuvedeno</div>
<div style="position:absolute;left:141.80px;top:137.51px;font-size:9.5px;line-height:14px;font-weight:bold;color:#000;-webkit-text-stroke:0.3px #000;white-space:pre;transform:scaleX(0.855);transform-origin:0 0">Skupina 4:</div>
<div style="position:absolute;left:188.67px;top:138.51px;font-size:9.5px;line-height:14px;font-weight:normal;color:#000;-webkit-text-stroke:0.15px #000;white-space:pre;transform:scaleX(0.846);transform-origin:0 0">Neuvedeno</div>
<div style="position:absolute;left:362.76px;top:153.01px;font-size:9.5px;line-height:14px;font-weight:bold;color:#000;-webkit-text-stroke:0.3px #000;white-space:pre;transform:scaleX(0.872);transform-origin:0 0">Délka</div>
<div style="position:absolute;left:422.45px;top:153.01px;font-size:9.5px;line-height:14px;font-weight:bold;color:#000;-webkit-text-stroke:0.3px #000;white-space:pre;transform:scaleX(0.893);transform-origin:0 0">Název sloupce</div>
<div style="position:absolute;left:639.30px;top:153.01px;font-size:9.5px;line-height:14px;font-weight:bold;color:#000;-webkit-text-stroke:0.3px #000;white-space:pre;transform:scaleX(0.887);transform-origin:0 0">Sestupně</div>
<div style="position:absolute;left:138.76px;top:168.51px;font-size:9.5px;line-height:14px;font-weight:bold;color:#000;-webkit-text-stroke:0.3px #000;white-space:pre;transform:scaleX(0.889);transform-origin:0 0">1. sloupec:</div>
<div style="position:absolute;left:188.78px;top:169.51px;font-size:9.5px;line-height:14px;font-weight:normal;color:#000;-webkit-text-stroke:0.15px #000;white-space:pre;transform:scaleX(0.832);transform-origin:0 0">Cena vstupní účetní</div>
<div style="position:absolute;left:370.59px;top:168.51px;font-size:9.5px;line-height:14px;font-weight:normal;color:#000;-webkit-text-stroke:0.15px #000;white-space:pre;transform:scaleX(0.860);transform-origin:0 0">20</div>
<div style="position:absolute;left:425.20px;top:168.51px;font-size:9.5px;line-height:14px;font-weight:normal;color:#000;-webkit-text-stroke:0.15px #000;white-space:pre;transform:scaleX(0.845);transform-origin:0 0">Vstupní cena</div>
<div style="position:absolute;left:138.98px;top:183.51px;font-size:9.5px;line-height:14px;font-weight:bold;color:#000;-webkit-text-stroke:0.3px #000;white-space:pre;transform:scaleX(0.884);transform-origin:0 0">2. sloupec:</div>
<div style="position:absolute;left:188.78px;top:184.51px;font-size:9.5px;line-height:14px;font-weight:normal;color:#000;-webkit-text-stroke:0.15px #000;white-space:pre;transform:scaleX(0.845);transform-origin:0 0">Cena oprávky účetní</div>
<div style="position:absolute;left:370.59px;top:183.51px;font-size:9.5px;line-height:14px;font-weight:normal;color:#000;-webkit-text-stroke:0.15px #000;white-space:pre;transform:scaleX(0.860);transform-origin:0 0">20</div>
<div style="position:absolute;left:424.99px;top:183.51px;font-size:9.5px;line-height:14px;font-weight:normal;color:#000;-webkit-text-stroke:0.15px #000;white-space:pre;transform:scaleX(0.845);transform-origin:0 0">Oprávky</div>
<div style="position:absolute;left:139.20px;top:199.51px;font-size:9.5px;line-height:14px;font-weight:bold;color:#000;-webkit-text-stroke:0.3px #000;white-space:pre;transform:scaleX(0.880);transform-origin:0 0">3. sloupec:</div>
<div style="position:absolute;left:188.78px;top:200.51px;font-size:9.5px;line-height:14px;font-weight:normal;color:#000;-webkit-text-stroke:0.15px #000;white-space:pre;transform:scaleX(0.849);transform-origin:0 0">Cena zůstatková účetní</div>
<div style="position:absolute;left:370.59px;top:199.51px;font-size:9.5px;line-height:14px;font-weight:normal;color:#000;-webkit-text-stroke:0.15px #000;white-space:pre;transform:scaleX(0.860);transform-origin:0 0">20</div>
<div style="position:absolute;left:424.99px;top:199.51px;font-size:9.5px;line-height:14px;font-weight:normal;color:#000;-webkit-text-stroke:0.15px #000;white-space:pre;transform:scaleX(0.855);transform-origin:0 0">Zůstatek</div>
<div style="position:absolute;left:139.20px;top:214.51px;font-size:9.5px;line-height:14px;font-weight:bold;color:#000;-webkit-text-stroke:0.3px #000;white-space:pre;transform:scaleX(0.880);transform-origin:0 0">4. sloupec:</div>
<div style="position:absolute;left:188.67px;top:215.51px;font-size:9.5px;line-height:14px;font-weight:normal;color:#000;-webkit-text-stroke:0.15px #000;white-space:pre;transform:scaleX(0.846);transform-origin:0 0">Neuvedeno</div>
<div style="position:absolute;left:139.20px;top:230.51px;font-size:9.5px;line-height:14px;font-weight:bold;color:#000;-webkit-text-stroke:0.3px #000;white-space:pre;transform:scaleX(0.880);transform-origin:0 0">5. sloupec:</div>
<div style="position:absolute;left:188.67px;top:231.51px;font-size:9.5px;line-height:14px;font-weight:normal;color:#000;-webkit-text-stroke:0.15px #000;white-space:pre;transform:scaleX(0.846);transform-origin:0 0">Neuvedeno</div>
<div style="position:absolute;left:138.98px;top:245.51px;font-size:9.5px;line-height:14px;font-weight:bold;color:#000;-webkit-text-stroke:0.3px #000;white-space:pre;transform:scaleX(0.884);transform-origin:0 0">6. sloupec:</div>
<div style="position:absolute;left:188.67px;top:246.51px;font-size:9.5px;line-height:14px;font-weight:normal;color:#000;-webkit-text-stroke:0.15px #000;white-space:pre;transform:scaleX(0.846);transform-origin:0 0">Neuvedeno</div>
<div style="position:absolute;left:138.98px;top:261.51px;font-size:9.5px;line-height:14px;font-weight:bold;color:#000;-webkit-text-stroke:0.3px #000;white-space:pre;transform:scaleX(0.884);transform-origin:0 0">7. sloupec:</div>
<div style="position:absolute;left:188.67px;top:262.51px;font-size:9.5px;line-height:14px;font-weight:normal;color:#000;-webkit-text-stroke:0.15px #000;white-space:pre;transform:scaleX(0.846);transform-origin:0 0">Neuvedeno</div>
<div style="position:absolute;left:138.98px;top:276.51px;font-size:9.5px;line-height:14px;font-weight:bold;color:#000;-webkit-text-stroke:0.3px #000;white-space:pre;transform:scaleX(0.884);transform-origin:0 0">8. sloupec:</div>
<div style="position:absolute;left:188.67px;top:277.51px;font-size:9.5px;line-height:14px;font-weight:normal;color:#000;-webkit-text-stroke:0.15px #000;white-space:pre;transform:scaleX(0.846);transform-origin:0 0">Neuvedeno</div>
<div style="position:absolute;left:138.98px;top:292.51px;font-size:9.5px;line-height:14px;font-weight:bold;color:#000;-webkit-text-stroke:0.3px #000;white-space:pre;transform:scaleX(0.884);transform-origin:0 0">9. sloupec:</div>
<div style="position:absolute;left:188.67px;top:293.51px;font-size:9.5px;line-height:14px;font-weight:normal;color:#000;-webkit-text-stroke:0.15px #000;white-space:pre;transform:scaleX(0.846);transform-origin:0 0">Neuvedeno</div>
<div style="position:absolute;left:134.66px;top:307.51px;font-size:9.5px;line-height:14px;font-weight:bold;color:#000;-webkit-text-stroke:0.3px #000;white-space:pre;transform:scaleX(0.878);transform-origin:0 0">10. sloupec:</div>
<div style="position:absolute;left:188.67px;top:308.51px;font-size:9.5px;line-height:14px;font-weight:normal;color:#000;-webkit-text-stroke:0.15px #000;white-space:pre;transform:scaleX(0.846);transform-origin:0 0">Neuvedeno</div>
<div style="position:absolute;left:134.66px;top:323.51px;font-size:9.5px;line-height:14px;font-weight:bold;color:#000;-webkit-text-stroke:0.3px #000;white-space:pre;transform:scaleX(0.886);transform-origin:0 0">11. sloupec:</div>
<div style="position:absolute;left:188.67px;top:324.51px;font-size:9.5px;line-height:14px;font-weight:normal;color:#000;-webkit-text-stroke:0.15px #000;white-space:pre;transform:scaleX(0.846);transform-origin:0 0">Neuvedeno</div>
<div style="position:absolute;left:134.66px;top:338.51px;font-size:9.5px;line-height:14px;font-weight:bold;color:#000;-webkit-text-stroke:0.3px #000;white-space:pre;transform:scaleX(0.878);transform-origin:0 0">12. sloupec:</div>
<div style="position:absolute;left:188.67px;top:339.51px;font-size:9.5px;line-height:14px;font-weight:normal;color:#000;-webkit-text-stroke:0.15px #000;white-space:pre;transform:scaleX(0.846);transform-origin:0 0">Neuvedeno</div>
<div style="position:absolute;left:134.66px;top:354.51px;font-size:9.5px;line-height:14px;font-weight:bold;color:#000;-webkit-text-stroke:0.3px #000;white-space:pre;transform:scaleX(0.878);transform-origin:0 0">13. sloupec:</div>
<div style="position:absolute;left:188.67px;top:355.51px;font-size:9.5px;line-height:14px;font-weight:normal;color:#000;-webkit-text-stroke:0.15px #000;white-space:pre;transform:scaleX(0.846);transform-origin:0 0">Neuvedeno</div>
<div style="position:absolute;left:134.66px;top:369.51px;font-size:9.5px;line-height:14px;font-weight:bold;color:#000;-webkit-text-stroke:0.3px #000;white-space:pre;transform:scaleX(0.878);transform-origin:0 0">14. sloupec:</div>
<div style="position:absolute;left:188.67px;top:370.51px;font-size:9.5px;line-height:14px;font-weight:normal;color:#000;-webkit-text-stroke:0.15px #000;white-space:pre;transform:scaleX(0.846);transform-origin:0 0">Neuvedeno</div>
<div style="position:absolute;left:103.18px;top:385.71px;font-size:9.5px;line-height:14px;font-weight:bold;color:#000;-webkit-text-stroke:0.3px #000;white-space:pre;transform:scaleX(0.877);transform-origin:0 0">Oddělovač sloupců:</div>
<div style="position:absolute;left:92.10px;top:400.51px;font-size:9.5px;line-height:14px;font-weight:bold;color:#000;-webkit-text-stroke:0.3px #000;white-space:pre;transform:scaleX(0.889);transform-origin:0 0">Třídění podle sloupců:</div>
<div style="position:absolute;left:120.65px;top:415.91px;font-size:9.5px;line-height:14px;font-weight:bold;color:#000;-webkit-text-stroke:0.3px #000;white-space:pre;transform:scaleX(0.891);transform-origin:0 0">Název obrázku:</div>
<div style="position:absolute;left:273.07px;top:385.81px;font-size:9.5px;line-height:14px;font-weight:bold;color:#000;-webkit-text-stroke:0.3px #000;white-space:pre;transform:scaleX(0.901);transform-origin:0 0">Celková délka řádku:</div>
<div style="position:absolute;left:369.88px;top:385.51px;font-size:9.5px;line-height:14px;font-weight:normal;color:#000;-webkit-text-stroke:0.15px #000;white-space:pre;transform:scaleX(0.900);transform-origin:0 0">62</div>
<div style="position:absolute;left:273.30px;top:400.81px;font-size:9.5px;line-height:14px;font-weight:bold;color:#000;-webkit-text-stroke:0.3px #000;white-space:pre;transform:scaleX(0.895);transform-origin:0 0">Součet za celou sestavu:</div>
<div style="position:absolute;left:420.30px;top:385.51px;font-size:9.5px;line-height:14px;font-weight:bold;color:#000;-webkit-text-stroke:0.3px #000;white-space:pre;transform:scaleX(0.927);transform-origin:0 0">Velikost:</div>
<div style="position:absolute;left:461.95px;top:386.51px;font-size:9.5px;line-height:14px;font-weight:normal;color:#000;-webkit-text-stroke:0.15px #000;white-space:pre;transform:scaleX(0.873);transform-origin:0 0">Na výšku 132 zn.</div>
<div style="position:absolute;left:404.90px;top:400.71px;font-size:9.5px;line-height:14px;font-weight:bold;color:#000;-webkit-text-stroke:0.3px #000;white-space:pre;transform:scaleX(0.885);transform-origin:0 0">Typ výstupu:</div>
<div style="position:absolute;left:462.17px;top:401.51px;font-size:9.5px;line-height:14px;font-weight:normal;color:#000;-webkit-text-stroke:0.15px #000;white-space:pre;transform:scaleX(0.854);transform-origin:0 0">Souhrn</div>
</body></html>
